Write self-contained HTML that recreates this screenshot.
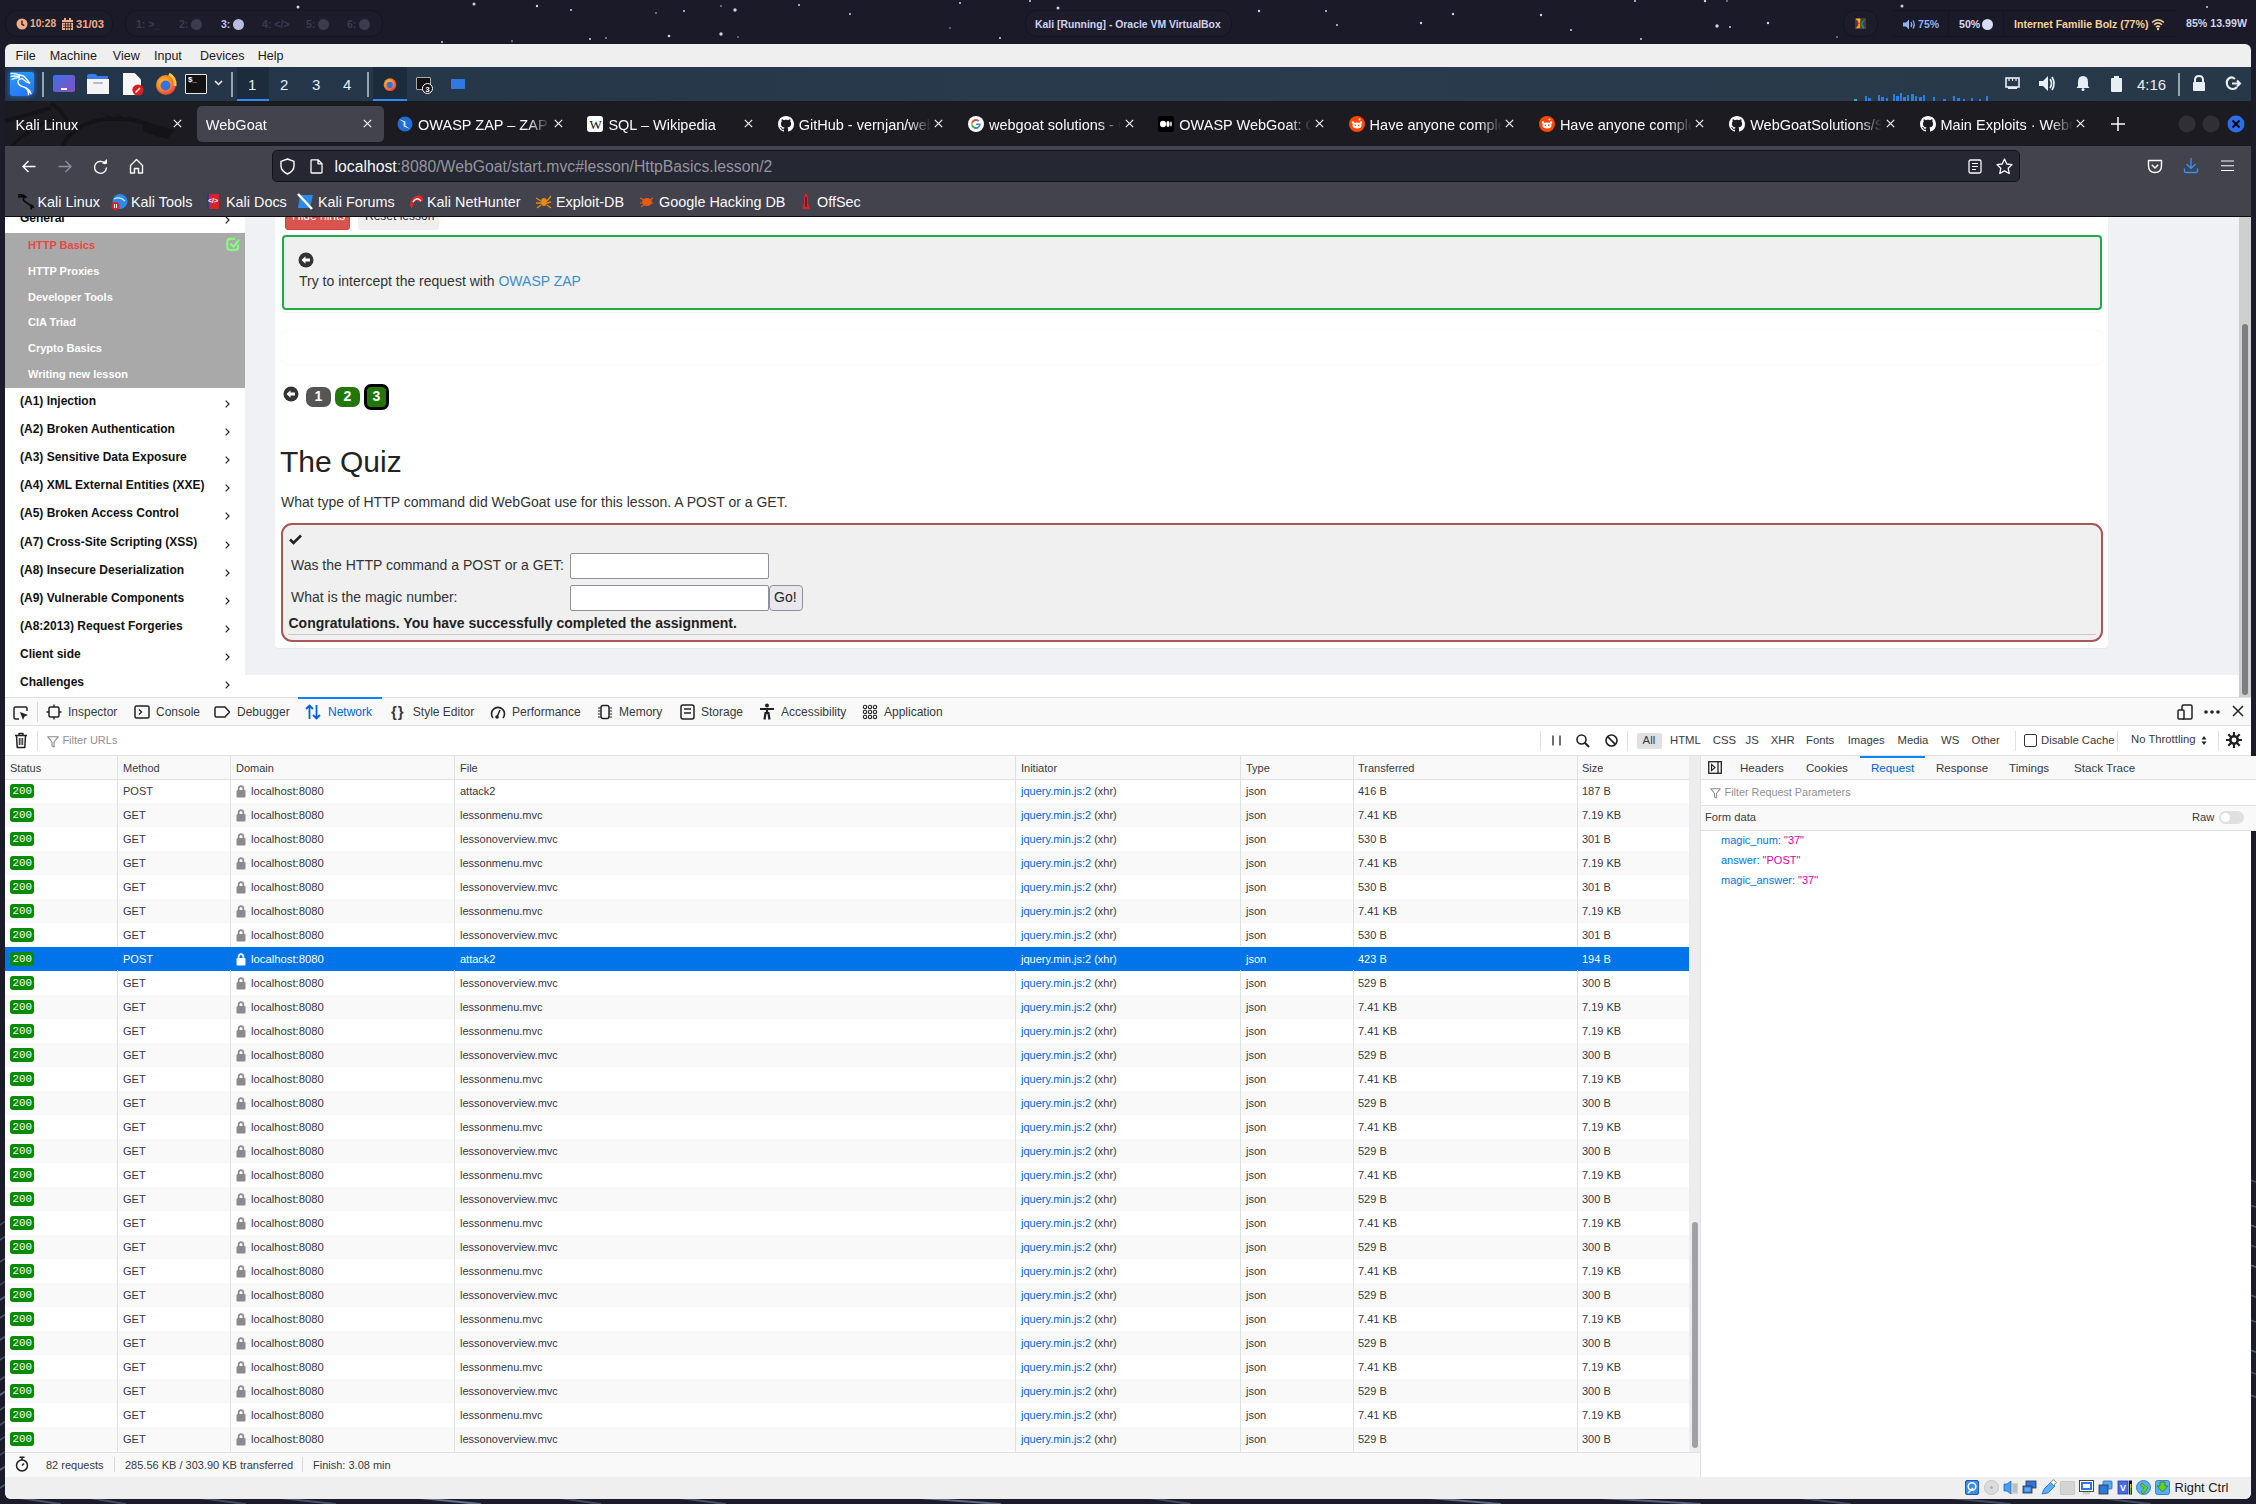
<!DOCTYPE html>
<html><head><meta charset="utf-8">
<style>
*{margin:0;padding:0;box-sizing:border-box}
html,body{width:2256px;height:1504px;overflow:hidden}
body{background:#1b1b29;font-family:"Liberation Sans",sans-serif;position:relative}
.a{position:absolute}
.t{position:absolute;white-space:nowrap;line-height:1}
svg{position:absolute;overflow:visible}
/* top desktop bar */
.pill{position:absolute;top:10px;height:27px;background:#1d1c2b;border:1px solid #15141f;border-radius:12px}
/* window */
#win{position:absolute;left:5px;top:44px;width:2246px;height:1455px;background:#efefef;border-radius:6px;overflow:hidden}
#vbmenu{position:absolute;left:5px;top:44px;width:2246px;height:23px}
#vbmenu span{position:absolute;top:6px;font-size:12.5px;color:#1a1a1a;line-height:1}
#panel{position:absolute;left:5px;top:67px;width:2246px;height:34px;background:linear-gradient(90deg,#233548,#293b4c 60%,#273949)}
#tabs{position:absolute;left:5px;top:101px;width:2246px;height:45px;background:#1c1b22}
#nav{position:absolute;left:5px;top:146px;width:2246px;height:40px;background:#42434c}
#bm{position:absolute;left:5px;top:186px;width:2246px;height:31px;background:#42434c;border-bottom:1px solid #0c0c0d}
.tab{position:absolute;top:5px;height:36px;width:188px;border-radius:5px}
.tab .tt{position:absolute;top:10px;font-size:14.4px;color:#fbfbfe;white-space:nowrap;overflow:hidden}
.tab .x{position:absolute;top:8px;width:16px;height:16px}
.bmi{position:absolute;top:8px;font-size:14.3px;color:#fbfbfe;white-space:nowrap}
</style></head>
<body>
<!-- desktop stars -->
<div class="a" style="left:0;top:0;width:2256px;height:44px;background:#1b1a29"></div>
<svg style="left:0;top:0" width="2256" height="44"><circle cx="474" cy="4" r="1.5" fill="#dfe8ff" opacity="0.9"/><circle cx="537" cy="6" r="1.2" fill="#dfe8ff" opacity="0.9"/><circle cx="571" cy="10" r="1" fill="#dfe8ff" opacity="0.9"/><circle cx="735" cy="10" r="1.7" fill="#dfe8ff" opacity="0.9"/><circle cx="684" cy="11" r="1" fill="#dfe8ff" opacity="0.9"/><circle cx="656" cy="13" r="0.8" fill="#dfe8ff" opacity="0.9"/><circle cx="721" cy="6" r="0.8" fill="#dfe8ff" opacity="0.9"/><circle cx="799" cy="5" r="1" fill="#dfe8ff" opacity="0.9"/><circle cx="850" cy="14" r="1" fill="#dfe8ff" opacity="0.9"/><circle cx="721" cy="34" r="1.7" fill="#dfe8ff" opacity="0.9"/><circle cx="669" cy="36" r="1.3" fill="#dfe8ff" opacity="0.9"/><circle cx="590" cy="39" r="1" fill="#dfe8ff" opacity="0.9"/><circle cx="606" cy="38" r="0.8" fill="#dfe8ff" opacity="0.9"/><circle cx="738" cy="37" r="0.7" fill="#dfe8ff" opacity="0.9"/><circle cx="442" cy="42" r="1" fill="#dfe8ff" opacity="0.9"/><circle cx="512" cy="41" r="0.8" fill="#dfe8ff" opacity="0.9"/><circle cx="1058" cy="8" r="1.5" fill="#dfe8ff" opacity="0.9"/><circle cx="1030" cy="1" r="1" fill="#dfe8ff" opacity="0.9"/><circle cx="950" cy="28" r="0.7" fill="#dfe8ff" opacity="0.9"/><circle cx="1259" cy="11" r="1.2" fill="#dfe8ff" opacity="0.9"/><circle cx="1326" cy="11" r="1" fill="#dfe8ff" opacity="0.9"/><circle cx="1337" cy="25" r="1" fill="#dfe8ff" opacity="0.9"/><circle cx="1421" cy="23" r="1.2" fill="#dfe8ff" opacity="0.9"/><circle cx="1453" cy="14" r="1.2" fill="#dfe8ff" opacity="0.9"/><circle cx="1541" cy="15" r="1.2" fill="#dfe8ff" opacity="0.9"/><circle cx="1571" cy="30" r="1" fill="#dfe8ff" opacity="0.9"/><circle cx="1641" cy="39" r="1" fill="#dfe8ff" opacity="0.9"/><circle cx="1717" cy="26" r="1.7" fill="#dfe8ff" opacity="0.9"/><circle cx="1730" cy="27" r="1" fill="#dfe8ff" opacity="0.9"/><circle cx="1768" cy="23" r="1.2" fill="#dfe8ff" opacity="0.9"/><circle cx="1705" cy="1" r="1.2" fill="#dfe8ff" opacity="0.9"/><circle cx="1635" cy="1" r="1" fill="#dfe8ff" opacity="0.9"/><circle cx="1727" cy="1" r="0.8" fill="#dfe8ff" opacity="0.9"/><circle cx="298" cy="7" r="1.5" fill="#dfe8ff" opacity="0.9"/><circle cx="1902" cy="6" r="1.5" fill="#dfe8ff" opacity="0.9"/><circle cx="2207" cy="7" r="1" fill="#dfe8ff" opacity="0.9"/><circle cx="1837" cy="37" r="0.8" fill="#dfe8ff" opacity="0.9"/><circle cx="1102" cy="12" r="1" fill="#dfe8ff" opacity="0.9"/><circle cx="1128" cy="20" r="1.2" fill="#dfe8ff" opacity="0.9"/><circle cx="960" cy="3" r="1" fill="#dfe8ff" opacity="0.9"/><circle cx="1175" cy="30" r="1" fill="#dfe8ff" opacity="0.9"/><circle cx="1000" cy="38" r="1" fill="#dfe8ff" opacity="0.9"/></svg>
<svg style="left:0;top:0" width="2256" height="1504"><g stroke-linecap="round"><path d="M20 1498L60 1504" stroke="#9fb8e8" stroke-width="2" opacity="0.35"/><path d="M90 1498L125 1504" stroke="#9fb8e8" stroke-width="2" opacity="0.3"/><path d="M200 1498L245 1504" stroke="#9fb8e8" stroke-width="2" opacity="0.3"/><path d="M280 1498L335 1504" stroke="#9fb8e8" stroke-width="2" opacity="0.35"/><path d="M420 1498L480 1504" stroke="#9fb8e8" stroke-width="2" opacity="0.55"/><path d="M560 1498L600 1504" stroke="#9fb8e8" stroke-width="2" opacity="0.3"/><path d="M680 1498L725 1504" stroke="#9fb8e8" stroke-width="2" opacity="0.35"/><path d="M920 1498L1000 1504" stroke="#9fb8e8" stroke-width="2" opacity="0.5"/><path d="M1150 1498L1190 1504" stroke="#9fb8e8" stroke-width="2" opacity="0.3"/><path d="M1430 1498L1500 1504" stroke="#9fb8e8" stroke-width="2" opacity="0.5"/><path d="M1600 1498L1700 1504" stroke="#9fb8e8" stroke-width="2" opacity="0.45"/><path d="M1800 1498L1850 1504" stroke="#9fb8e8" stroke-width="2" opacity="0.3"/><path d="M1950 1498L2010 1504" stroke="#9fb8e8" stroke-width="2" opacity="0.3"/><path d="M2100 1498L2150 1504" stroke="#9fb8e8" stroke-width="2" opacity="0.3"/><path d="M0 1300L6 1296" stroke="#9fb8e8" stroke-width="2" opacity="0.4"/><path d="M0 1340L6 1336" stroke="#9fb8e8" stroke-width="2" opacity="0.35"/><path d="M0 1380L6 1376" stroke="#9fb8e8" stroke-width="2" opacity="0.3"/><path d="M0 1395L6 1391" stroke="#9fb8e8" stroke-width="2" opacity="0.45"/><path d="M0 1425L6 1421" stroke="#9fb8e8" stroke-width="2" opacity="0.3"/><path d="M0 1470L6 1466" stroke="#9fb8e8" stroke-width="2" opacity="0.4"/><path d="M2250 1180L2256 1182" stroke="#9fb8e8" stroke-width="1.5" opacity="0.3"/><path d="M2250 1205L2256 1207" stroke="#9fb8e8" stroke-width="1.5" opacity="0.35"/><path d="M2250 1225L2256 1227" stroke="#9fb8e8" stroke-width="1.5" opacity="0.45"/><path d="M2250 1245L2256 1247" stroke="#9fb8e8" stroke-width="1.5" opacity="0.3"/><path d="M2250 1265L2256 1267" stroke="#9fb8e8" stroke-width="1.5" opacity="0.5"/><path d="M2250 1295L2256 1297" stroke="#9fb8e8" stroke-width="1.5" opacity="0.4"/><path d="M2250 1320L2256 1322" stroke="#9fb8e8" stroke-width="1.5" opacity="0.35"/><path d="M2250 1350L2256 1352" stroke="#9fb8e8" stroke-width="1.5" opacity="0.45"/><path d="M2250 1372L2256 1374" stroke="#9fb8e8" stroke-width="1.5" opacity="0.3"/><path d="M2250 1395L2256 1397" stroke="#9fb8e8" stroke-width="1.5" opacity="0.4"/><path d="M0 1225L6 1221" stroke="#9fb8e8" stroke-width="1.5" opacity="0.3"/><path d="M0 1240L6 1236" stroke="#9fb8e8" stroke-width="1.5" opacity="0.35"/><path d="M0 1262L6 1258" stroke="#9fb8e8" stroke-width="1.5" opacity="0.4"/><path d="M0 1285L6 1281" stroke="#9fb8e8" stroke-width="1.5" opacity="0.3"/><path d="M0 1318L6 1314" stroke="#9fb8e8" stroke-width="1.5" opacity="0.4"/><path d="M0 1360L6 1356" stroke="#9fb8e8" stroke-width="1.5" opacity="0.35"/><path d="M0 1410L6 1406" stroke="#9fb8e8" stroke-width="1.5" opacity="0.4"/><path d="M0 1440L6 1436" stroke="#9fb8e8" stroke-width="1.5" opacity="0.35"/><path d="M0 1455L6 1451" stroke="#9fb8e8" stroke-width="1.5" opacity="0.3"/><path d="M0 1488L6 1484" stroke="#9fb8e8" stroke-width="1.5" opacity="0.4"/></g></svg>

<!-- top-left pill -->
<div class="pill" style="left:5px;width:108px"></div>
<svg style="left:16px;top:18px" width="12" height="12" viewBox="0 0 12 12"><circle cx="6" cy="6" r="5.5" fill="#f2ad85"/><path d="M6 2.5V6.3L8.3 7.6" stroke="#1d1c2b" stroke-width="1.4" fill="none"/></svg>
<div class="t" style="left:30px;top:19px;font-size:10.2px;font-weight:bold;color:#f2ad85">10:28</div>
<svg style="left:62px;top:18px" width="11" height="12" viewBox="0 0 11 12"><rect x="0" y="2" width="11" height="10" fill="#f2ad85"/><rect x="2" y="0" width="2" height="3" fill="#f2ad85"/><rect x="7" y="0" width="2" height="3" fill="#f2ad85"/><path d="M0 4.5H11M1 7H10M1 9.5H10M3.5 5V12M6 5V12M8.5 5V12" stroke="#1d1c2b" stroke-width="0.8"/></svg>
<div class="t" style="left:76px;top:19px;font-size:11.2px;font-weight:bold;color:#f2ad85">31/03</div>

<div class="pill" style="left:125px;width:258px"></div>
<div class="t" style="left:136px;top:19px;font-size:10.5px;font-weight:bold;color:#3b3a4f">1: &gt;_</div>
<div class="t" style="left:179px;top:19px;font-size:10.5px;font-weight:bold;color:#3b3a4f">2:</div>
<svg style="left:191px;top:19px" width="11" height="11"><circle cx="5.5" cy="5.5" r="5.5" fill="#3b3a4f"/></svg>
<div class="t" style="left:221px;top:19px;font-size:10.5px;font-weight:bold;color:#c0c3e0">3:</div>
<svg style="left:233px;top:19px" width="11" height="11"><circle cx="5.5" cy="5.5" r="5.5" fill="#b8bce0"/></svg>
<div class="t" style="left:262px;top:19px;font-size:10.5px;font-weight:bold;color:#3b3a4f">4: &lt;/&gt;</div>
<div class="t" style="left:306px;top:19px;font-size:10.5px;font-weight:bold;color:#3b3a4f">5:</div>
<svg style="left:318px;top:19px" width="11" height="11"><circle cx="5.5" cy="5.5" r="5.5" fill="#3b3a4f"/></svg>
<div class="t" style="left:347px;top:19px;font-size:10.5px;font-weight:bold;color:#3b3a4f">6:</div>
<svg style="left:359px;top:19px" width="11" height="11"><circle cx="5.5" cy="5.5" r="5.5" fill="#3b3a4f"/></svg>

<!-- title pill -->
<div class="pill" style="left:1025px;width:207px"></div>
<div class="t" style="left:1035px;top:20px;font-size:10.4px;font-weight:bold;color:#d0d3ee">Kali [Running] - Oracle VM VirtualBox</div>

<!-- right pills -->
<div class="pill" style="left:1843px;width:35px"></div>
<svg style="left:1855px;top:18px" width="11" height="11" viewBox="0 0 11 11"><rect x="0" y="0" width="11" height="11" fill="#4a3a38"/><path d="M0.8 0.8H5.2V10.2H0.8L3 7.5V3.5Z" fill="#ff9a10"/><path d="M2.5 4L5.2 5.5L2.5 7Z" fill="#ee3a00"/><path d="M0.8 0.8H5.2V3.5Z" fill="#ffc800"/><path d="M5.4 5.5L9.5 0.8V3L7.5 5.5L9.5 10.2H7.5Z" fill="#0a8a8a"/><path d="M5.4 5.5L7 4L7.5 5.5Z" fill="#0a8a20"/><path d="M7.5 7L9.5 10.2H7.5Z" fill="#00b080"/></svg>
<div class="a" style="left:1893px;top:10px;width:283px;height:27px;background:#1b1a29;border-top:1px solid #15141f;border-bottom:1px solid #15141f"></div>
<div class="a" style="left:1948px;top:11px;width:1px;height:25px;background:#15141f"></div>
<div class="a" style="left:2003px;top:11px;width:1px;height:25px;background:#15141f"></div>
<svg style="left:1903px;top:19px" width="13" height="11" viewBox="0 0 13 11"><path d="M0 3.5H3L6 0.5V10.5L3 7.5H0Z" fill="#8fb1f0"/><path d="M8 3Q9.5 5.5 8 8M10 1.5Q12.5 5.5 10 9.5" stroke="#8fb1f0" stroke-width="1.3" fill="none"/></svg>
<div class="t" style="left:1918px;top:19px;font-size:10.6px;font-weight:bold;color:#8fb1f0">75%</div>
<div class="t" style="left:1959px;top:19px;font-size:10.6px;font-weight:bold;color:#d8dcf5">50%</div>
<svg style="left:1982px;top:19px" width="11" height="11"><circle cx="5.5" cy="5.5" r="5.5" fill="#d8dcf5"/></svg>
<div class="t" style="left:2014px;top:19px;font-size:10.57px;font-weight:bold;color:#f4d49a">Internet Familie Bolz (77%)</div>
<svg style="left:2151px;top:18px" width="14" height="12" viewBox="0 0 14 12"><path d="M1 4.5Q7 -1 13 4.5M3 6.8Q7 3 11 6.8M5 9Q7 7.3 9 9" stroke="#f4d49a" stroke-width="1.5" fill="none"/><circle cx="7" cy="11" r="1.2" fill="#f4d49a"/></svg>
<div class="t" style="left:2186px;top:18px;font-size:10.65px;font-weight:bold;color:#d0d3ee">85% 13.99W</div>

<div id="win"></div>
<div id="vbmenu">
  <span style="left:10.5px">File</span>
  <span style="left:44.7px">Machine</span>
  <span style="left:107.8px">View</span>
  <span style="left:149px">Input</span>
  <span style="left:195px">Devices</span>
  <span style="left:252.8px">Help</span>
</div>
<div id="panel"></div>
<!-- kali icon -->
<div class="a" style="left:10px;top:72px;width:24px;height:24px;border-radius:2px 2px 6px 2px;background:linear-gradient(160deg,#27a0ff,#2a6ef5);box-shadow:0 0 4px 1px rgba(40,130,255,.6)"></div>
<svg style="left:10px;top:72px" width="24" height="24" viewBox="0 0 24 24"><g stroke="#fff" stroke-width="1.3" fill="none" stroke-linecap="round"><path d="M1 1.5Q5 1.2 9.5 3.2M1.3 4.3Q5 3.6 9.5 4.6M2 7.2Q5 5.6 9.5 5.6"/><path d="M9.5 3.2Q13.5 3 15.5 6L20 11.5L16.5 10Q14.5 8.3 13 7.3"/><path d="M12.5 6.5Q7.5 6.8 8 10.5Q9 14 14 15Q18.5 16.5 18.5 22.5"/><path d="M14.5 15.3Q18 16 20.5 20M17.5 17.5L21 21.5"/></g></svg>
<div class="a" style="left:42px;top:72px;width:2px;height:25px;background:#9aa3ad"></div>
<div class="a" style="left:53px;top:75px;width:22px;height:17px;border-radius:2px;background:linear-gradient(135deg,#3a70e8,#8a4fc0)"></div>
<div class="a" style="left:61px;top:88px;width:6px;height:2px;background:#fff"></div>
<div class="a" style="left:87px;top:74px;width:10px;height:5px;border-radius:2px 2px 0 0;background:#3a7ae8"></div>
<div class="a" style="left:88px;top:76px;width:20px;height:4px;background:#3a7ae8"></div>
<div class="a" style="left:87px;top:79px;width:22px;height:15px;background:#f4f4f4"></div>
<div class="a" style="left:93px;top:82px;width:10px;height:2px;border-radius:1px;background:#bbb"></div>
<div class="a" style="left:123px;top:73px;width:18px;height:22px;background:#f6f6f6;clip-path:polygon(0 0,65% 0,100% 30%,100% 100%,0 100%)"></div>
<svg style="left:132px;top:84px" width="12" height="12"><circle cx="6" cy="6" r="5.6" fill="#d81e1e"/><path d="M3.5 8.5L8 4" stroke="#fff" stroke-width="1.5"/></svg>
<svg style="left:155px;top:73px" width="22" height="22" viewBox="0 0 22 22"><defs><radialGradient id="ff" cx="0.4" cy="0.4" r="0.7"><stop offset="0" stop-color="#ffd23c"/><stop offset="0.5" stop-color="#ff8a1e"/><stop offset="1" stop-color="#e4254a"/></radialGradient></defs><circle cx="11" cy="12" r="10" fill="url(#ff)"/><circle cx="10.5" cy="12.5" r="5" fill="#3b6fe0"/><path d="M14 1Q21 5 20 13" stroke="#ffc53a" stroke-width="3" fill="none"/></svg>
<div class="a" style="left:185px;top:74px;width:22px;height:20px;background:#121212;border:1px solid #e8e8e8;border-radius:1px"></div>
<div class="t" style="left:188px;top:76px;font-size:8px;font-weight:bold;color:#fff">$_</div>
<svg style="left:214px;top:80px" width="9" height="6"><path d="M1 1L4.5 4.5L8 1" stroke="#fff" stroke-width="1.5" fill="none"/></svg>
<div class="a" style="left:231px;top:72px;width:2px;height:25px;background:#9aa3ad"></div>
<div class="a" style="left:237px;top:67px;width:32px;height:34px;background:#1d2c3d"></div>
<div class="a" style="left:237px;top:99px;width:32px;height:2px;background:#2f8af5"></div>
<div class="t" style="left:248px;top:77px;font-size:15px;color:#e8eef5">1</div>
<div class="t" style="left:280px;top:77px;font-size:15px;color:#e8eef5">2</div>
<div class="t" style="left:312px;top:77px;font-size:15px;color:#e8eef5">3</div>
<div class="t" style="left:343px;top:77px;font-size:15px;color:#e8eef5">4</div>
<div class="a" style="left:367px;top:72px;width:2px;height:25px;background:#9aa3ad"></div>
<div class="a" style="left:373px;top:67px;width:34px;height:34px;background:#1d2c3d"></div>
<div class="a" style="left:373px;top:99px;width:34px;height:2px;background:#2f8af5"></div>
<svg style="left:383px;top:77px" width="14" height="14" viewBox="0 0 22 22"><circle cx="11" cy="12" r="10" fill="url(#ff)"/><circle cx="10.5" cy="12.5" r="5" fill="#3b6fe0"/></svg>
<div class="a" style="left:416px;top:77px;width:15px;height:13px;background:#121212;border:1px solid #aaa;border-radius:1px"></div>
<svg style="left:422px;top:83px" width="11" height="11"><circle cx="5.5" cy="5.5" r="5" fill="#111" stroke="#fff" stroke-width="1"/><text x="5.5" y="8.6" font-size="8" font-family="Liberation Sans" font-weight="bold" fill="#fff" text-anchor="middle">3</text></svg>
<div class="a" style="left:451px;top:79px;width:14px;height:10px;border-radius:1px;background:#2f7ae0"></div>
<!-- right side panel -->
<svg style="left:1853px;top:88px" width="140" height="13"><g fill="#2b7de0">
<rect x="1" y="11" width="3" height="2" fill="#19c0a0"/><rect x="12" y="8" width="2" height="5"/><rect x="15" y="10" width="3" height="3"/><rect x="25" y="7" width="2" height="6"/><rect x="28" y="9" width="3" height="4"/><rect x="33" y="10" width="2" height="3"/><rect x="40" y="6" width="2" height="7"/><rect x="43" y="8" width="3" height="5"/><rect x="47" y="5" width="2" height="8"/><rect x="50" y="9" width="3" height="4"/><rect x="54" y="7" width="2" height="6"/><rect x="58" y="6" width="3" height="7"/><rect x="62" y="8" width="2" height="5"/><rect x="66" y="9" width="3" height="4"/><rect x="70" y="7" width="2" height="6"/><rect x="80" y="9" width="2" height="4"/><rect x="90" y="11" width="3" height="2"/><rect x="100" y="8" width="2" height="5"/><rect x="104" y="10" width="3" height="3"/><rect x="110" y="11" width="2" height="2"/><rect x="118" y="10" width="2" height="3"/><rect x="126" y="11" width="2" height="2"/><rect x="133" y="8" width="2" height="5"/></g></svg>
<svg style="left:2005px;top:77px" width="15" height="13" viewBox="0 0 15 13"><rect x="1" y="1" width="13" height="9" fill="none" stroke="#e8eef5" stroke-width="1.6"/><path d="M4 1V4M7.5 1V4M11 1V4" stroke="#e8eef5" stroke-width="1.2"/><rect x="3" y="10" width="9" height="2" fill="#e8eef5"/></svg>
<svg style="left:2039px;top:75px" width="17" height="17" viewBox="0 0 17 17"><path d="M0 6H4L9 1V16L4 11H0Z" fill="#e8eef5"/><path d="M11 4Q14 8.5 11 13M13 2Q17 8.5 13 15" stroke="#e8eef5" stroke-width="1.8" fill="none"/></svg>
<svg style="left:2076px;top:75px" width="14" height="16" viewBox="0 0 14 16"><path d="M7 1Q12 1 12 7V11L13.5 13H0.5L2 11V7Q2 1 7 1Z" fill="#e8eef5"/><circle cx="7" cy="14.5" r="1.5" fill="#e8eef5"/></svg>
<div class="a" style="left:2111px;top:78px;width:11px;height:14px;background:#e8eef5;border-radius:1px"></div>
<div class="a" style="left:2114px;top:76px;width:5px;height:3px;background:#e8eef5"></div>
<div class="t" style="left:2137px;top:77px;font-size:15px;color:#e8eef5">4:16</div>
<div class="a" style="left:2178px;top:73px;width:2px;height:23px;background:#9aa3ad"></div>
<svg style="left:2192px;top:75px" width="14" height="16" viewBox="0 0 14 16"><path d="M3 7V5Q3 1 7 1Q11 1 11 5V7" stroke="#e8eef5" stroke-width="2" fill="none"/><rect x="1" y="7" width="12" height="9" rx="1" fill="#e8eef5"/></svg>
<svg style="left:2225px;top:76px" width="16" height="15" viewBox="0 0 16 15"><path d="M10 3Q7 0.5 4.5 2Q1 4 2 8.5Q3.5 13 8 13Q10.5 13 12 11" stroke="#e8eef5" stroke-width="2.2" fill="none"/><path d="M7 7.5H15M12 4.5L15 7.5L12 10.5" stroke="#e8eef5" stroke-width="2" fill="none"/></svg>

<div id="tabs"></div>
<svg style="left:5px;top:101px" width="190" height="45" viewBox="0 0 190 45"><g stroke="#141418" fill="none" stroke-width="4"><path d="M57 46Q68 22 101 18Q135 16 158 31"/><path d="M0 20L46 7"/><path d="M46 2Q56 9 63 21"/><path d="M4 47Q25 27 50 17" stroke-width="3"/></g><g fill="#141418"><path d="M138 20L170 29L162 38Q150 35 138 30Z"/><path d="M97 12L106 18H112Z"/><path d="M109 12L117 18H123Z"/><path d="M121 14L129 19H135Z"/></g></svg>
<div class="t" style="left:15.5px;top:118px;width:154.5px;font-size:14.5px;color:#fbfbfe;overflow:hidden;-webkit-mask-image:linear-gradient(90deg,#000 132px,transparent 154px)">Kali Linux</div>
<svg style="left:173.0px;top:119px" width="9" height="9"><path d="M0.8 0.8L8.2 8.2M8.2 0.8L0.8 8.2" stroke="#fbfbfe" stroke-width="1.1"/></svg>
<div class="a" style="left:197.3px;top:106px;width:187px;height:36px;background:#42434c;border-radius:5px"></div>
<div class="t" style="left:205.8px;top:118px;width:154.5px;font-size:14.5px;color:#fbfbfe;overflow:hidden;-webkit-mask-image:linear-gradient(90deg,#000 132px,transparent 154px)">WebGoat</div>
<svg style="left:363.3px;top:119px" width="9" height="9"><path d="M0.8 0.8L8.2 8.2M8.2 0.8L0.8 8.2" stroke="#fbfbfe" stroke-width="1.1"/></svg>
<svg style="left:397.1px;top:116px" width="16" height="16" viewBox="0 0 16 16"><circle cx="8" cy="8" r="7.5" fill="#1f6fd0"/><path d="M2 3L9 6L6 8L13 13L6 10L9 8Z" fill="#fff"/></svg>
<div class="t" style="left:418.1px;top:118px;width:132.5px;font-size:14.5px;color:#fbfbfe;overflow:hidden;-webkit-mask-image:linear-gradient(90deg,#000 110px,transparent 132px)">OWASP ZAP – ZAP in Ten</div>
<svg style="left:553.6px;top:119px" width="9" height="9"><path d="M0.8 0.8L8.2 8.2M8.2 0.8L0.8 8.2" stroke="#fbfbfe" stroke-width="1.1"/></svg>
<div class="a" style="left:587.4px;top:116px;width:16px;height:16px;background:#fff;border-radius:3px"></div><div class="t" style="left:589.4px;top:118px;font-family:'Liberation Serif',serif;font-size:13px;color:#111">W</div>
<div class="t" style="left:608.4px;top:118px;width:132.5px;font-size:14.5px;color:#fbfbfe;overflow:hidden;-webkit-mask-image:linear-gradient(90deg,#000 110px,transparent 132px)">SQL – Wikipedia</div>
<svg style="left:743.9px;top:119px" width="9" height="9"><path d="M0.8 0.8L8.2 8.2M8.2 0.8L0.8 8.2" stroke="#fbfbfe" stroke-width="1.1"/></svg>
<svg style="left:777.7px;top:116px" width="16" height="16" viewBox="0 0 16 16"><path fill="#fbfbfe" d="M8 0C3.58 0 0 3.58 0 8c0 3.54 2.29 6.53 5.47 7.59.4.07.55-.17.55-.38 0-.19-.01-.82-.01-1.49-2.01.37-2.53-.49-2.69-.94-.09-.23-.48-.94-.82-1.13-.28-.15-.68-.52-.01-.53.63-.01 1.08.58 1.23.82.72 1.21 1.87.87 2.33.66.07-.52.28-.87.51-1.07-1.78-.2-3.640-.89-3.640-3.95 0-.87.31-1.59.82-2.15-.08-.2-.36-1.02.08-2.12 0 0 .67-.21 2.2.82.64-.18 1.32-.27 2-.27.68 0 1.36.09 2 .27 1.53-1.04 2.2-.82 2.2-.82.44 1.1.16 1.92.08 2.12.51.56.82 1.27.82 2.15 0 3.07-1.87 3.75-3.65 3.95.29.25.54.73.54 1.48 0 1.07-.01 1.93-.01 2.2 0 .21.15.46.55.38A8.013 8.013 0 0016 8c0-4.42-3.58-8-8-8z"/></svg>
<div class="t" style="left:798.7px;top:118px;width:132.5px;font-size:14.5px;color:#fbfbfe;overflow:hidden;-webkit-mask-image:linear-gradient(90deg,#000 110px,transparent 132px)">GitHub - vernjan/webgoat</div>
<svg style="left:934.2px;top:119px" width="9" height="9"><path d="M0.8 0.8L8.2 8.2M8.2 0.8L0.8 8.2" stroke="#fbfbfe" stroke-width="1.1"/></svg>
<svg style="left:968.0px;top:116px" width="16" height="16" viewBox="0 0 16 16"><circle cx="8" cy="8" r="8" fill="#fff"/><path d="M8 3.2A4.8 4.8 0 0 1 11.2 4.4L10 5.6A3.2 3.2 0 1 0 11 9H8V7.4H12.7A4.8 4.8 0 1 1 8 3.2Z" fill="#4285f4"/><path d="M3.5 6.2A4.8 4.8 0 0 1 11.2 4.4L10 5.6A3.2 3.2 0 0 0 5 6.8Z" fill="#ea4335"/><path d="M3.4 9.8A4.8 4.8 0 0 0 10.6 12.2L9.4 11A3.2 3.2 0 0 1 5 9.2Z" fill="#34a853"/><path d="M3.4 9.8A4.8 4.8 0 0 1 3.5 6.2L5 6.8A3.2 3.2 0 0 0 5 9.2Z" fill="#fbbc05"/></svg>
<div class="t" style="left:989.0px;top:118px;width:132.5px;font-size:14.5px;color:#fbfbfe;overflow:hidden;-webkit-mask-image:linear-gradient(90deg,#000 110px,transparent 132px)">webgoat solutions - Google</div>
<svg style="left:1124.5px;top:119px" width="9" height="9"><path d="M0.8 0.8L8.2 8.2M8.2 0.8L0.8 8.2" stroke="#fbfbfe" stroke-width="1.1"/></svg>
<div class="a" style="left:1158.3px;top:116px;width:16px;height:16px;background:#000;border-radius:2px"></div><svg style="left:1158.3px;top:116px" width="16" height="16"><ellipse cx="5" cy="8" rx="3" ry="3.2" fill="#fff"/><ellipse cx="10" cy="8" rx="1.6" ry="3" fill="#fff"/><ellipse cx="13" cy="8" rx="0.8" ry="2.7" fill="#fff"/></svg>
<div class="t" style="left:1179.3px;top:118px;width:132.5px;font-size:14.5px;color:#fbfbfe;overflow:hidden;-webkit-mask-image:linear-gradient(90deg,#000 110px,transparent 132px)">OWASP WebGoat: General</div>
<svg style="left:1314.8px;top:119px" width="9" height="9"><path d="M0.8 0.8L8.2 8.2M8.2 0.8L0.8 8.2" stroke="#fbfbfe" stroke-width="1.1"/></svg>
<svg style="left:1348.6px;top:116px" width="16" height="16" viewBox="0 0 16 16"><circle cx="8" cy="8" r="8" fill="#ff4500"/><ellipse cx="8" cy="9.5" rx="4.5" ry="3" fill="#fff"/><circle cx="12" cy="6.5" r="1.2" fill="#fff"/><circle cx="4" cy="6.5" r="1.2" fill="#fff"/><circle cx="10.5" cy="3.5" r="1" fill="#fff"/><circle cx="6.3" cy="9.2" r="0.8" fill="#ff4500"/><circle cx="9.7" cy="9.2" r="0.8" fill="#ff4500"/></svg>
<div class="t" style="left:1369.6px;top:118px;width:132.5px;font-size:14.5px;color:#fbfbfe;overflow:hidden;-webkit-mask-image:linear-gradient(90deg,#000 110px,transparent 132px)">Have anyone completed</div>
<svg style="left:1505.1px;top:119px" width="9" height="9"><path d="M0.8 0.8L8.2 8.2M8.2 0.8L0.8 8.2" stroke="#fbfbfe" stroke-width="1.1"/></svg>
<svg style="left:1538.9px;top:116px" width="16" height="16" viewBox="0 0 16 16"><circle cx="8" cy="8" r="8" fill="#ff4500"/><ellipse cx="8" cy="9.5" rx="4.5" ry="3" fill="#fff"/><circle cx="12" cy="6.5" r="1.2" fill="#fff"/><circle cx="4" cy="6.5" r="1.2" fill="#fff"/><circle cx="10.5" cy="3.5" r="1" fill="#fff"/><circle cx="6.3" cy="9.2" r="0.8" fill="#ff4500"/><circle cx="9.7" cy="9.2" r="0.8" fill="#ff4500"/></svg>
<div class="t" style="left:1559.9px;top:118px;width:132.5px;font-size:14.5px;color:#fbfbfe;overflow:hidden;-webkit-mask-image:linear-gradient(90deg,#000 110px,transparent 132px)">Have anyone completed</div>
<svg style="left:1695.4px;top:119px" width="9" height="9"><path d="M0.8 0.8L8.2 8.2M8.2 0.8L0.8 8.2" stroke="#fbfbfe" stroke-width="1.1"/></svg>
<svg style="left:1729.2px;top:116px" width="16" height="16" viewBox="0 0 16 16"><path fill="#fbfbfe" d="M8 0C3.58 0 0 3.58 0 8c0 3.54 2.29 6.53 5.47 7.59.4.07.55-.17.55-.38 0-.19-.01-.82-.01-1.49-2.01.37-2.53-.49-2.69-.94-.09-.23-.48-.94-.82-1.13-.28-.15-.68-.52-.01-.53.63-.01 1.08.58 1.23.82.72 1.21 1.87.87 2.33.66.07-.52.28-.87.51-1.07-1.78-.2-3.640-.89-3.640-3.95 0-.87.31-1.59.82-2.15-.08-.2-.36-1.02.08-2.12 0 0 .67-.21 2.2.82.64-.18 1.32-.27 2-.27.68 0 1.36.09 2 .27 1.53-1.04 2.2-.82 2.2-.82.44 1.1.16 1.92.08 2.12.51.56.82 1.27.82 2.15 0 3.07-1.87 3.75-3.65 3.95.29.25.54.73.54 1.48 0 1.07-.01 1.93-.01 2.2 0 .21.15.46.55.38A8.013 8.013 0 0016 8c0-4.42-3.58-8-8-8z"/></svg>
<div class="t" style="left:1750.2px;top:118px;width:132.5px;font-size:14.5px;color:#fbfbfe;overflow:hidden;-webkit-mask-image:linear-gradient(90deg,#000 110px,transparent 132px)">WebGoatSolutions/Sol</div>
<svg style="left:1885.7px;top:119px" width="9" height="9"><path d="M0.8 0.8L8.2 8.2M8.2 0.8L0.8 8.2" stroke="#fbfbfe" stroke-width="1.1"/></svg>
<svg style="left:1919.5px;top:116px" width="16" height="16" viewBox="0 0 16 16"><path fill="#fbfbfe" d="M8 0C3.58 0 0 3.58 0 8c0 3.54 2.29 6.53 5.47 7.59.4.07.55-.17.55-.38 0-.19-.01-.82-.01-1.49-2.01.37-2.53-.49-2.69-.94-.09-.23-.48-.94-.82-1.13-.28-.15-.68-.52-.01-.53.63-.01 1.08.58 1.23.82.72 1.21 1.87.87 2.33.66.07-.52.28-.87.51-1.07-1.78-.2-3.640-.89-3.640-3.95 0-.87.31-1.59.82-2.15-.08-.2-.36-1.02.08-2.12 0 0 .67-.21 2.2.82.64-.18 1.32-.27 2-.27.68 0 1.36.09 2 .27 1.53-1.04 2.2-.82 2.2-.82.44 1.1.16 1.92.08 2.12.51.56.82 1.27.82 2.15 0 3.07-1.87 3.75-3.65 3.95.29.25.54.73.54 1.48 0 1.07-.01 1.93-.01 2.2 0 .21.15.46.55.38A8.013 8.013 0 0016 8c0-4.42-3.58-8-8-8z"/></svg>
<div class="t" style="left:1940.5px;top:118px;width:132.5px;font-size:14.5px;color:#fbfbfe;overflow:hidden;-webkit-mask-image:linear-gradient(90deg,#000 110px,transparent 132px)">Main Exploits · WebGoat</div>
<svg style="left:2076.0px;top:119px" width="9" height="9"><path d="M0.8 0.8L8.2 8.2M8.2 0.8L0.8 8.2" stroke="#fbfbfe" stroke-width="1.1"/></svg>
<svg style="left:2111px;top:117px" width="14" height="14"><path d="M7 0V14M0 7H14" stroke="#fbfbfe" stroke-width="1.5"/></svg>
<svg style="left:2178px;top:115px" width="70" height="18"><circle cx="9" cy="9" r="8.5" fill="#2f3036"/><circle cx="33" cy="9" r="8.5" fill="#2f3036"/><circle cx="58" cy="9" r="8.5" fill="#2a6ef0"/><path d="M54.5 5.5L61.5 12.5M61.5 5.5L54.5 12.5" stroke="#0d0d10" stroke-width="2.2"/></svg>
<div id="nav"></div>
<svg style="left:22px;top:160px" width="14" height="13" viewBox="0 0 14 13"><path d="M13.5 6.5H1M6.5 1L1 6.5L6.5 12" stroke="#fbfbfe" stroke-width="1.4" fill="none"/></svg>
<svg style="left:58px;top:160px" width="14" height="13" viewBox="0 0 14 13"><path d="M0.5 6.5H13M7.5 1L13 6.5L7.5 12" stroke="#8f8f9d" stroke-width="1.4" fill="none"/></svg>
<svg style="left:93px;top:159px" width="15" height="15" viewBox="0 0 15 15"><path d="M12.5 5A6 6 0 1 0 13.5 8.5" stroke="#fbfbfe" stroke-width="1.4" fill="none"/><path d="M9 4.8H14V0Z" fill="#fbfbfe"/></svg>
<svg style="left:129px;top:158px" width="15" height="16" viewBox="0 0 15 16"><path d="M1.5 15V7.5L7.5 1.5L13.5 7.5V15H9.5V10.5H5.5V15Z" stroke="#fbfbfe" stroke-width="1.4" fill="none" stroke-linejoin="round"/></svg>
<div class="a" style="left:272px;top:150px;width:1748px;height:32px;background:#1c1b22;border-radius:5px;border:1px solid #141318"></div>
<div class="a" style="left:273px;top:151px;width:1746px;height:30px;background:#252733;border-radius:4px"></div>
<svg style="left:280px;top:158px" width="15" height="17" viewBox="0 0 15 17"><path d="M7.5 1L14 3.3V8Q14 13 7.5 16Q1 13 1 8V3.3Z" stroke="#fbfbfe" stroke-width="1.4" fill="none" stroke-linejoin="round"/></svg>
<svg style="left:310px;top:159px" width="13" height="15" viewBox="0 0 13 15"><path d="M1 1.5Q1 0.8 1.7 0.8H8L12 4.8V13.3Q12 14 11.3 14H1.7Q1 14 1 13.3Z M8 0.8V4.8H12" stroke="#fbfbfe" stroke-width="1.3" fill="none" stroke-linejoin="round"/></svg>
<div class="t" style="left:334.5px;top:159px;font-size:15.77px;color:#fbfbfe">localhost<span style="color:#95959f">:8080/WebGoat/start.mvc#lesson/HttpBasics.lesson/2</span></div>
<svg style="left:1968px;top:159px" width="14" height="15" viewBox="0 0 14 15"><rect x="1" y="1" width="12" height="13" rx="1.5" stroke="#fbfbfe" stroke-width="1.3" fill="none"/><path d="M4 4.5H10M4 7.5H10M4 10.5H8" stroke="#fbfbfe" stroke-width="1.2"/></svg>
<svg style="left:1996px;top:158px" width="17" height="17" viewBox="0 0 17 17"><path d="M8.5 1L10.8 6L16 6.6L12.2 10.2L13.2 15.5L8.5 12.9L3.8 15.5L4.8 10.2L1 6.6L6.2 6Z" stroke="#fbfbfe" stroke-width="1.3" fill="none" stroke-linejoin="round"/></svg>
<svg style="left:2147px;top:159px" width="16" height="15" viewBox="0 0 16 15"><path d="M1.5 1.5H14.5V6.5Q14.5 13.5 8 13.5Q1.5 13.5 1.5 6.5Z" stroke="#fbfbfe" stroke-width="1.4" fill="none" stroke-linejoin="round"/><path d="M4.8 5.8L8 9L11.2 5.8" stroke="#fbfbfe" stroke-width="1.5" fill="none"/></svg>
<svg style="left:2183px;top:157px" width="16" height="17" viewBox="0 0 16 17"><path d="M8 1V11.5M3.5 7L8 11.5L12.5 7M1.5 11.5V14Q1.5 15.5 3 15.5H13Q14.5 15.5 14.5 14V11.5" stroke="#3a8ef6" stroke-width="1.4" fill="none"/></svg>
<svg style="left:2221px;top:160px" width="13" height="12" viewBox="0 0 13 12"><path d="M0 1H13M0 5.75H13M0 10.5H13" stroke="#fbfbfe" stroke-width="1.15"/></svg>

<div id="bm"></div>
<svg style="left:16.8px;top:193px" width="17" height="17" viewBox="0 0 17 17"><path d="M1 2Q6 1 9 4Q5 5 7 8Q10 10 13 12Q15 14 14 16.5M1 4Q5 3 8 5M13 12Q16 12 16.5 15" stroke="#0a0a0a" stroke-width="1.6" fill="none"/></svg>
<div class="t" style="left:37.5px;top:195px;font-size:14.4px;color:#fbfbfe">Kali Linux</div>
<svg style="left:111px;top:193px" width="17" height="17"><circle cx="9" cy="8.5" r="7.5" fill="#2d8ae8"/><path d="M3 6Q9 3 14 8" stroke="#cfe8ff" stroke-width="1.3" fill="none"/><circle cx="4.5" cy="13" r="4" fill="#e02020"/><path d="M3.5 11V15M5.5 11V15" stroke="#fff" stroke-width="1"/></svg>
<div class="t" style="left:131px;top:195px;font-size:14.4px;color:#fbfbfe">Kali Tools</div>
<div class="a" style="left:207px;top:194px;width:12px;height:15px;background:#d8232a;border-left:2px solid #2a3a8a"></div><div class="t" style="left:208px;top:197px;font-size:7px;font-weight:bold;color:#fff">&lt;/&gt;</div>
<div class="t" style="left:226px;top:195px;font-size:14.4px;color:#fbfbfe">Kali Docs</div>
<svg style="left:297px;top:193px" width="17" height="17"><path d="M3 2H16L13 15H1Z" fill="#2d8ae8"/><path d="M1 1L15 16" stroke="#fff" stroke-width="2.5"/></svg>
<div class="t" style="left:318px;top:195px;font-size:14.4px;color:#fbfbfe">Kali Forums</div>
<svg style="left:408px;top:193px" width="17" height="17"><path d="M2 12Q3 3 11 2Q16 3 15 8L11 9Q9 6 6 9L4 16Z" fill="#e02424"/><path d="M5 9Q9 3 13 8" stroke="#fff" stroke-width="1.4" fill="none"/></svg>
<div class="t" style="left:427px;top:195px;font-size:14.4px;color:#fbfbfe">Kali NetHunter</div>
<svg style="left:535px;top:193px" width="17" height="17"><ellipse cx="9" cy="9" rx="3" ry="4" fill="#e88a10"/><path d="M1 5L6 8M1 10L6 10M2 15L6 12M16 3L12 8M16 9L12 10M16 15L12 12" stroke="#e88a10" stroke-width="1.3"/></svg>
<div class="t" style="left:556px;top:195px;font-size:14.4px;color:#fbfbfe">Exploit-DB</div>
<svg style="left:639px;top:195px" width="15" height="13"><ellipse cx="8" cy="7" rx="5" ry="4" fill="#e85a10"/><path d="M1 3L5 5M1 8H4M2 12L5 10M14 3L11 5M14 8H12" stroke="#e85a10" stroke-width="1.2"/></svg>
<div class="t" style="left:659px;top:195px;font-size:14.4px;color:#fbfbfe">Google Hacking DB</div>
<svg style="left:800px;top:193px" width="12" height="17"><path d="M6 0Q9 4 8 10L10 16H2L4 10Q3 4 6 0Z" fill="#d8232a"/><path d="M6 4V14" stroke="#111" stroke-width="1"/></svg>
<div class="t" style="left:817px;top:195px;font-size:14.4px;color:#fbfbfe">OffSec</div>
<!-- page -->
<div class="a" style="left:5px;top:217px;width:2246px;height:480px;background:#fff"></div>
<div class="a" style="left:245px;top:217px;width:1994px;height:458px;background:#f0f1f5"></div>
<div class="a" style="left:275px;top:217px;width:1833px;height:431px;background:#fff;border-radius:0 0 4px 4px;box-shadow:0 1px 1px rgba(0,0,0,.04)"></div>
<!-- page scrollbar -->
<div class="a" style="left:2239px;top:217px;width:12px;height:480px;background:#cfcfcf"></div>
<div class="a" style="left:2242px;top:324px;width:6px;height:371px;background:#7c7f80;border-radius:3px"></div>
<!-- sidebar -->
<div class="a" style="left:5px;top:233px;width:240px;height:155px;background:#a9a9a9"></div>
<div class="t" style="left:28px;top:240px;font-size:11px;font-weight:bold;color:#e8483f">HTTP Basics</div>
<div class="t" style="left:28px;top:266px;font-size:11px;font-weight:bold;color:#fff">HTTP Proxies</div>
<div class="t" style="left:28px;top:292px;font-size:11px;font-weight:bold;color:#fff">Developer Tools</div>
<div class="t" style="left:28px;top:317px;font-size:11px;font-weight:bold;color:#fff">CIA Triad</div>
<div class="t" style="left:28px;top:343px;font-size:11px;font-weight:bold;color:#fff">Crypto Basics</div>
<div class="t" style="left:28px;top:369px;font-size:11px;font-weight:bold;color:#fff">Writing new lesson</div>
<svg style="left:225px;top:237px" width="17" height="16" viewBox="0 0 17 16"><path d="M10.2 1.9H5.3Q2.3 1.9 2.3 4.9V9.9Q2.3 12.9 5.3 12.9H10.1Q13.1 12.9 13.1 9.9V7.6" stroke="#85fb7f" stroke-width="2.1" fill="none"/><path d="M5.2 6.6L8.6 9.6L14.2 2.6" stroke="#85fb7f" stroke-width="2.3" fill="none"/></svg>
<div class="t" style="left:20px;top:395.0px;font-size:12px;font-weight:bold;color:#111">(A1) Injection</div>
<svg style="left:225px;top:400.0px" width="5" height="8" viewBox="0 0 5 8"><path d="M0.7 0.7L4 4L0.7 7.3" stroke="#222" stroke-width="1.2" fill="none"/></svg>
<div class="t" style="left:20px;top:423.1px;font-size:12px;font-weight:bold;color:#111">(A2) Broken Authentication</div>
<svg style="left:225px;top:428.1px" width="5" height="8" viewBox="0 0 5 8"><path d="M0.7 0.7L4 4L0.7 7.3" stroke="#222" stroke-width="1.2" fill="none"/></svg>
<div class="t" style="left:20px;top:451.2px;font-size:12px;font-weight:bold;color:#111">(A3) Sensitive Data Exposure</div>
<svg style="left:225px;top:456.2px" width="5" height="8" viewBox="0 0 5 8"><path d="M0.7 0.7L4 4L0.7 7.3" stroke="#222" stroke-width="1.2" fill="none"/></svg>
<div class="t" style="left:20px;top:479.3px;font-size:12px;font-weight:bold;color:#111">(A4) XML External Entities (XXE)</div>
<svg style="left:225px;top:484.3px" width="5" height="8" viewBox="0 0 5 8"><path d="M0.7 0.7L4 4L0.7 7.3" stroke="#222" stroke-width="1.2" fill="none"/></svg>
<div class="t" style="left:20px;top:507.4px;font-size:12px;font-weight:bold;color:#111">(A5) Broken Access Control</div>
<svg style="left:225px;top:512.4px" width="5" height="8" viewBox="0 0 5 8"><path d="M0.7 0.7L4 4L0.7 7.3" stroke="#222" stroke-width="1.2" fill="none"/></svg>
<div class="t" style="left:20px;top:535.5px;font-size:12px;font-weight:bold;color:#111">(A7) Cross-Site Scripting (XSS)</div>
<svg style="left:225px;top:540.5px" width="5" height="8" viewBox="0 0 5 8"><path d="M0.7 0.7L4 4L0.7 7.3" stroke="#222" stroke-width="1.2" fill="none"/></svg>
<div class="t" style="left:20px;top:563.6px;font-size:12px;font-weight:bold;color:#111">(A8) Insecure Deserialization</div>
<svg style="left:225px;top:568.6px" width="5" height="8" viewBox="0 0 5 8"><path d="M0.7 0.7L4 4L0.7 7.3" stroke="#222" stroke-width="1.2" fill="none"/></svg>
<div class="t" style="left:20px;top:591.7px;font-size:12px;font-weight:bold;color:#111">(A9) Vulnerable Components</div>
<svg style="left:225px;top:596.7px" width="5" height="8" viewBox="0 0 5 8"><path d="M0.7 0.7L4 4L0.7 7.3" stroke="#222" stroke-width="1.2" fill="none"/></svg>
<div class="t" style="left:20px;top:619.8px;font-size:12px;font-weight:bold;color:#111">(A8:2013) Request Forgeries</div>
<svg style="left:225px;top:624.8px" width="5" height="8" viewBox="0 0 5 8"><path d="M0.7 0.7L4 4L0.7 7.3" stroke="#222" stroke-width="1.2" fill="none"/></svg>
<div class="t" style="left:20px;top:647.9px;font-size:12px;font-weight:bold;color:#111">Client side</div>
<svg style="left:225px;top:652.9px" width="5" height="8" viewBox="0 0 5 8"><path d="M0.7 0.7L4 4L0.7 7.3" stroke="#222" stroke-width="1.2" fill="none"/></svg>
<div class="t" style="left:20px;top:676.0px;font-size:12px;font-weight:bold;color:#111">Challenges</div>
<svg style="left:225px;top:681.0px" width="5" height="8" viewBox="0 0 5 8"><path d="M0.7 0.7L4 4L0.7 7.3" stroke="#222" stroke-width="1.2" fill="none"/></svg>
<svg style="left:225px;top:216px" width="5" height="8" viewBox="0 0 5 8"><path d="M0.7 0.7L4 4L0.7 7.3" stroke="#222" stroke-width="1.2" fill="none"/></svg>
<!-- hints buttons -->
<div class="a" style="left:0;top:217px;width:2256px;height:20px;overflow:hidden">
<div class="a" style="left:285px;top:-12px;width:65px;height:25px;background:#d9534f;border:1px solid #d43f3a;border-radius:3px"></div>
<div class="t" style="left:292px;top:-7px;font-size:12px;color:#fff">Hide hints</div>
<div class="a" style="left:358px;top:-12px;width:81px;height:25px;background:#efefef;border-radius:3px"></div>
<div class="t" style="left:365px;top:-7px;font-size:12px;color:#333">Reset lesson</div>
<div class="t" style="left:20px;top:-5px;font-size:12px;font-weight:bold;color:#111">General</div>
</div>
<!-- green hint box -->
<div class="a" style="left:281px;top:217px;width:1822px;height:95px;border-radius:0 0 5px 5px;box-shadow:0 1px 2px rgba(0,0,0,.06)"></div>
<div class="a" style="left:281px;top:331px;width:1822px;height:33px;background:#fff;border-radius:5px;box-shadow:0 0 2px rgba(0,0,0,.07)"></div>
<div class="a" style="left:282px;top:235px;width:1820px;height:75px;background:#f0f0f0;border:2px solid #1faa4a;border-radius:4px"></div>
<svg style="left:298px;top:252px" width="16" height="16" viewBox="0 0 16 16"><circle cx="8" cy="8" r="7.5" fill="#333"/><path d="M3.5 8L7.5 4.2V6.6H12V9.4H7.5V11.8Z" fill="#fff"/></svg>
<div class="t" style="left:299px;top:274px;font-size:14px;color:#333">Try to intercept the request with <span style="color:#3a8ed0">OWASP ZAP</span></div>
<!-- pagination -->
<svg style="left:283px;top:386px" width="16" height="16" viewBox="0 0 16 16"><circle cx="8" cy="8" r="7.5" fill="#333"/><path d="M3.5 8L7.5 4.2V6.6H12V9.4H7.5V11.8Z" fill="#fff"/></svg>
<div class="a" style="left:306px;top:387px;width:25px;height:20px;background:#555;border-radius:7px"></div>
<div class="t" style="left:306px;top:388.5px;width:25px;text-align:center;font-size:14px;font-weight:bold;color:#fff">1</div>
<div class="a" style="left:335px;top:387px;width:25px;height:20px;background:#227708;border-radius:7px"></div>
<div class="t" style="left:335px;top:388.5px;width:25px;text-align:center;font-size:14px;font-weight:bold;color:#fff">2</div>
<div class="a" style="left:364px;top:384px;width:25px;height:26px;background:#227708;border:3px solid #000;border-radius:7px"></div>
<div class="t" style="left:364px;top:388.5px;width:25px;text-align:center;font-size:14px;font-weight:bold;color:#fff">3</div>
<!-- quiz -->
<div class="t" style="left:280px;top:447px;font-size:30px;color:#222">The Quiz</div>
<div class="t" style="left:281px;top:495px;font-size:14px;color:#333">What type of HTTP command did WebGoat use for this lesson. A POST or a GET.</div>
<div class="a" style="left:281px;top:523px;width:1822px;height:119px;background:#f0f0f0;border:2px solid #a85757;border-radius:11px"></div>
<svg style="left:289px;top:534px" width="13" height="11" viewBox="0 0 13 11"><path d="M1 5.5L4.5 9L12 1.5" stroke="#222" stroke-width="2.6" fill="none"/></svg>
<div class="t" style="left:291px;top:558px;font-size:14px;color:#333">Was the HTTP command a POST or a GET:</div>
<div class="a" style="left:570px;top:553px;width:199px;height:26px;background:#fff;border:1px solid #8f8f9d;border-radius:2px"></div>
<div class="t" style="left:291px;top:590px;font-size:14px;color:#333">What is the magic number:</div>
<div class="a" style="left:570px;top:585px;width:199px;height:26px;background:#fff;border:1px solid #8f8f9d;border-radius:2px"></div>
<div class="a" style="left:769px;top:585px;width:34px;height:26px;background:#e9e9ed;border:1px solid #8f8f9d;border-radius:4px"></div>
<div class="t" style="left:774px;top:590px;font-size:14px;color:#222">Go!</div>
<div class="t" style="left:288.5px;top:616px;font-size:14px;font-weight:bold;color:#222">Congratulations. You have successfully completed the assignment.</div>
<div class="a" style="left:288px;top:634px;width:1808px;height:1px;background:#c8c8c8"></div>

<!-- devtools -->
<div class="a" style="left:5px;top:697px;width:2246px;height:780px;background:#fff"></div>
<div class="a" style="left:5px;top:697px;width:2246px;height:29px;background:#f9f9fa;border-top:1px solid #e0e0e2;border-bottom:1px solid #e0e0e2"></div>
<div class="a" style="left:298px;top:697px;width:84px;height:2px;background:#0a84ff"></div>
<svg style="left:13px;top:705px" width="16" height="16" viewBox="0 0 16 16"><path d="M6 14H2.5Q1 14 1 12.5V3.5Q1 2 2.5 2H12.5Q14 2 14 3.5V6" stroke="#222" stroke-width="1.5" fill="none"/><path d="M7 7L15 10L11.5 11.5L10 15Z" fill="#222"/></svg>
<div class="a" style="left:37px;top:702px;width:1px;height:20px;background:#d7d7db"></div>
<svg style="left:46px;top:704px" width="16" height="16" viewBox="0 0 16 16"><rect x="3" y="3" width="10" height="10" rx="1.5" stroke="#222" stroke-width="1.5" fill="none"/><path d="M8 0.5V3M8 13V15.5M0.5 8H3M13 8H15.5" stroke="#222" stroke-width="1.4"/></svg>
<div class="t" style="left:68px;top:706px;font-size:12px;color:#38383d">Inspector</div>
<svg style="left:134px;top:704px" width="16" height="16" viewBox="0 0 16 16"><rect x="1" y="2" width="14" height="12" rx="1.5" stroke="#222" stroke-width="1.5" fill="none"/><path d="M5 5.5L7.5 8L5 10.5" stroke="#222" stroke-width="1.4" fill="none"/></svg>
<div class="t" style="left:156px;top:706px;font-size:12px;color:#38383d">Console</div>
<svg style="left:214px;top:704px" width="17" height="16" viewBox="0 0 17 16"><path d="M2.5 3H11L15.5 8L11 13H2.5Q1 13 1 11.5V4.5Q1 3 2.5 3Z" stroke="#222" stroke-width="1.5" fill="none" stroke-linejoin="round"/></svg>
<div class="t" style="left:237px;top:706px;font-size:12px;color:#38383d">Debugger</div>
<svg style="left:305px;top:704px" width="16" height="16" viewBox="0 0 16 16"><path d="M4.5 15V1.5M1 5L4.5 1.5L8 5M11.5 1V14.5M8 11L11.5 14.5L15 11" stroke="#0061e0" stroke-width="1.8" fill="none"/></svg>
<div class="t" style="left:328px;top:706px;font-size:12px;color:#0061e0">Network</div>
<div class="t" style="left:391px;top:704px;font-size:15px;font-weight:bold;color:#38383d;letter-spacing:1px">{}</div>
<div class="t" style="left:412.8px;top:706px;font-size:12px;color:#38383d">Style Editor</div>
<svg style="left:490px;top:704px" width="16" height="16" viewBox="0 0 16 16"><path d="M3 14A6.5 6.5 0 1 1 13 14" stroke="#222" stroke-width="1.6" fill="none"/><path d="M7 13L10 6" stroke="#222" stroke-width="1.5"/><circle cx="7" cy="13" r="1.8" fill="#222"/></svg>
<div class="t" style="left:512px;top:706px;font-size:12px;color:#38383d">Performance</div>
<svg style="left:597px;top:704px" width="16" height="16" viewBox="0 0 16 16"><rect x="4" y="1.5" width="8" height="13" rx="2" stroke="#222" stroke-width="1.5" fill="none"/><path d="M1 4H3.5M1 7H3.5M1 10H3.5M1 13H3.5M12.5 4H15M12.5 7H15M12.5 10H15M12.5 13H15" stroke="#222" stroke-width="1"/></svg>
<div class="t" style="left:619px;top:706px;font-size:12px;color:#38383d">Memory</div>
<svg style="left:680px;top:704px" width="15" height="16" viewBox="0 0 15 16"><rect x="1" y="1" width="13" height="14" rx="2" stroke="#222" stroke-width="1.5" fill="none"/><path d="M4 5H11M4 9H11" stroke="#222" stroke-width="1.3"/></svg>
<div class="t" style="left:701px;top:706px;font-size:12px;color:#38383d">Storage</div>
<svg style="left:759px;top:703px" width="16" height="17" viewBox="0 0 16 17"><circle cx="8" cy="2.5" r="2" fill="#222"/><path d="M1 6H15M8 6V11M5.5 16.5L6.5 10H9.5L10.5 16.5" stroke="#222" stroke-width="2.2" fill="none"/></svg>
<div class="t" style="left:781px;top:706px;font-size:12px;color:#38383d">Accessibility</div>
<svg style="left:862px;top:704px" width="16" height="16" viewBox="0 0 16 16"><g fill="none" stroke="#222" stroke-width="1.1"><circle cx="3" cy="3" r="1.7"/><circle cx="8" cy="3" r="1.7"/><circle cx="13" cy="3" r="1.7"/><circle cx="3" cy="8" r="1.7"/><circle cx="8" cy="8" r="1.7"/><circle cx="13" cy="8" r="1.7"/><circle cx="3" cy="13" r="1.7"/><circle cx="8" cy="13" r="1.7"/><circle cx="13" cy="13" r="1.7"/></g></svg>
<div class="t" style="left:884px;top:706px;font-size:12px;color:#38383d">Application</div>
<svg style="left:2177px;top:704px" width="16" height="16" viewBox="0 0 16 16"><rect x="5" y="1" width="10" height="14" rx="1.5" stroke="#222" stroke-width="1.5" fill="none"/><rect x="1" y="6" width="6" height="9" rx="1" stroke="#222" stroke-width="1.5" fill="#f9f9fa"/></svg>
<svg style="left:2204px;top:710px" width="16" height="4"><circle cx="2" cy="2" r="1.8" fill="#222"/><circle cx="8" cy="2" r="1.8" fill="#222"/><circle cx="14" cy="2" r="1.8" fill="#222"/></svg>
<svg style="left:2232px;top:705px" width="12" height="12"><path d="M1 1L11 11M11 1L1 11" stroke="#222" stroke-width="1.5"/></svg>
<!-- toolbar -->
<div class="a" style="left:5px;top:726px;width:2246px;height:30px;background:#fff;border-bottom:1px solid #e0e0e2"></div>
<svg style="left:14px;top:732px" width="14" height="17" viewBox="0 0 14 17"><path d="M1 3.5H13M5 3.5V1.5H9V3.5M2.5 3.5L3.2 15.5H10.8L11.5 3.5" stroke="#222" stroke-width="1.5" fill="none" stroke-linejoin="round"/><path d="M5.3 6V13M7 6V13M8.7 6V13" stroke="#222" stroke-width="1"/></svg>
<div class="a" style="left:37px;top:731px;width:1px;height:20px;background:#e0e0e2"></div>
<svg style="left:47px;top:736px" width="12" height="12" viewBox="0 0 12 12"><path d="M0.8 0.8H11.2L7 6V11L5 10V6Z" stroke="#8a8a8f" stroke-width="1.1" fill="none" stroke-linejoin="round"/></svg>
<div class="t" style="left:62.4px;top:735px;font-size:11px;color:#8f8f95">Filter URLs</div>
<div class="a" style="left:1540px;top:731px;width:1px;height:20px;background:#e0e0e2"></div>
<svg style="left:1552px;top:735px" width="9" height="11"><path d="M1 0.5V10.5M8 0.5V10.5" stroke="#222" stroke-width="1.3"/></svg>
<svg style="left:1576px;top:734px" width="14" height="14" viewBox="0 0 14 14"><circle cx="5.5" cy="5.5" r="4.5" stroke="#222" stroke-width="1.6" fill="none"/><path d="M8.8 8.8L13 13" stroke="#222" stroke-width="2"/></svg>
<svg style="left:1605px;top:734px" width="13" height="13" viewBox="0 0 13 13"><circle cx="6.5" cy="6.5" r="5.5" stroke="#222" stroke-width="1.6" fill="none"/><path d="M2.6 2.6L10.4 10.4" stroke="#222" stroke-width="1.6"/></svg>
<div class="a" style="left:1627px;top:731px;width:1px;height:20px;background:#e0e0e2"></div>
<div class="a" style="left:1637px;top:733px;width:25px;height:16px;background:#e0e0e2;border-radius:2px"></div>
<div class="t" style="left:1642.6px;top:735px;font-size:11.3px;color:#38383d">All</div>
<div class="t" style="left:1670px;top:735px;font-size:11.3px;color:#38383d">HTML</div>
<div class="t" style="left:1712.8px;top:735px;font-size:11.3px;color:#38383d">CSS</div>
<div class="t" style="left:1745.6px;top:735px;font-size:11.3px;color:#38383d">JS</div>
<div class="t" style="left:1770.7px;top:735px;font-size:11.3px;color:#38383d">XHR</div>
<div class="t" style="left:1806px;top:735px;font-size:11.3px;color:#38383d">Fonts</div>
<div class="t" style="left:1847.7px;top:735px;font-size:11.3px;color:#38383d">Images</div>
<div class="t" style="left:1897.5px;top:735px;font-size:11.3px;color:#38383d">Media</div>
<div class="t" style="left:1941px;top:735px;font-size:11.3px;color:#38383d">WS</div>
<div class="t" style="left:1971.6px;top:735px;font-size:11.3px;color:#38383d">Other</div>
<div class="a" style="left:2015px;top:731px;width:1px;height:20px;background:#e0e0e2"></div>
<div class="a" style="left:2023.5px;top:734px;width:13px;height:13px;border:1.3px solid #333;border-radius:2px;background:#fff"></div>
<div class="t" style="left:2041px;top:735px;font-size:11.3px;color:#38383d">Disable Cache</div>
<div class="a" style="left:2117px;top:731px;width:1px;height:20px;background:#e0e0e2"></div>
<div class="t" style="left:2131px;top:734px;font-size:11.3px;color:#38383d">No Throttling</div>
<svg style="left:2201px;top:735px" width="6" height="11"><path d="M0.5 4.5L3 1L5.5 4.5ZM0.5 6.5L3 10L5.5 6.5Z" fill="#222"/></svg>
<div class="a" style="left:2218px;top:731px;width:1px;height:20px;background:#e0e0e2"></div>
<svg style="left:2225px;top:731px" width="18" height="18" viewBox="0 0 18 18"><g stroke="#222" stroke-width="2.2"><path d="M9 1V17M1 9H17M3.3 3.3L14.7 14.7M14.7 3.3L3.3 14.7"/></g><circle cx="9" cy="9" r="5" fill="#222"/><circle cx="9" cy="9" r="2.4" fill="#fff"/></svg>
<!-- table header -->
<div class="a" style="left:5px;top:756px;width:1684px;height:24px;background:#f9f9fa;border-bottom:1px solid #e0e0e2"></div>
<div class="t" style="left:10px;top:763px;font-size:11px;color:#38383d">Status</div>
<div class="t" style="left:123px;top:763px;font-size:11px;color:#38383d">Method</div>
<div class="t" style="left:236px;top:763px;font-size:11px;color:#38383d">Domain</div>
<div class="t" style="left:460px;top:763px;font-size:11px;color:#38383d">File</div>
<div class="t" style="left:1021px;top:763px;font-size:11px;color:#38383d">Initiator</div>
<div class="t" style="left:1246px;top:763px;font-size:11px;color:#38383d">Type</div>
<div class="t" style="left:1358px;top:763px;font-size:11px;color:#38383d">Transferred</div>
<div class="t" style="left:1582px;top:763px;font-size:11px;color:#38383d">Size</div>
<div id="rows">
<div class="a" style="left:5px;top:779px;width:1684px;height:24px;background:#fff"></div>
<div class="a" style="left:10px;top:784px;width:24px;height:14px;background:#058b00;border-radius:3px"></div><div class="t" style="left:12.5px;top:786px;font-family:'Liberation Mono',monospace;font-size:10.8px;color:#fff">200</div>
<div class="t" style="left:123px;top:786px;font-size:11px;color:#38383d">POST</div>
<svg style="left:236px;top:785px" width="10" height="13" viewBox="0 0 10 13"><path d="M2.6 5.5V4Q2.6 1.2 5 1.2Q7.4 1.2 7.4 4V5.5" stroke="#8a8a8f" stroke-width="1.7" fill="none"/><rect x="0.5" y="5" width="9" height="7.5" rx="1" fill="#8a8a8f"/></svg>
<div class="t" style="left:251px;top:786px;font-size:11.3px;color:#38383d">localhost:8080</div>
<div class="t" style="left:460px;top:786px;font-size:11px;color:#38383d">attack2</div>
<div class="t" style="left:1021px;top:786px;font-size:11px;color:#0061e0">jquery.min.js:2 <span style="color:#38383d">(xhr)</span></div>
<div class="t" style="left:1246px;top:786px;font-size:11px;color:#38383d">json</div>
<div class="t" style="left:1358px;top:786px;font-size:11px;color:#38383d">416 B</div>
<div class="t" style="left:1582px;top:786px;font-size:11px;color:#38383d">187 B</div>
<div class="a" style="left:5px;top:803px;width:1684px;height:24px;background:#f9f9fa"></div>
<div class="a" style="left:10px;top:808px;width:24px;height:14px;background:#058b00;border-radius:3px"></div><div class="t" style="left:12.5px;top:810px;font-family:'Liberation Mono',monospace;font-size:10.8px;color:#fff">200</div>
<div class="t" style="left:123px;top:810px;font-size:11px;color:#38383d">GET</div>
<svg style="left:236px;top:809px" width="10" height="13" viewBox="0 0 10 13"><path d="M2.6 5.5V4Q2.6 1.2 5 1.2Q7.4 1.2 7.4 4V5.5" stroke="#8a8a8f" stroke-width="1.7" fill="none"/><rect x="0.5" y="5" width="9" height="7.5" rx="1" fill="#8a8a8f"/></svg>
<div class="t" style="left:251px;top:810px;font-size:11.3px;color:#38383d">localhost:8080</div>
<div class="t" style="left:460px;top:810px;font-size:11px;color:#38383d">lessonmenu.mvc</div>
<div class="t" style="left:1021px;top:810px;font-size:11px;color:#0061e0">jquery.min.js:2 <span style="color:#38383d">(xhr)</span></div>
<div class="t" style="left:1246px;top:810px;font-size:11px;color:#38383d">json</div>
<div class="t" style="left:1358px;top:810px;font-size:11px;color:#38383d">7.41 KB</div>
<div class="t" style="left:1582px;top:810px;font-size:11px;color:#38383d">7.19 KB</div>
<div class="a" style="left:5px;top:827px;width:1684px;height:24px;background:#fff"></div>
<div class="a" style="left:10px;top:832px;width:24px;height:14px;background:#058b00;border-radius:3px"></div><div class="t" style="left:12.5px;top:834px;font-family:'Liberation Mono',monospace;font-size:10.8px;color:#fff">200</div>
<div class="t" style="left:123px;top:834px;font-size:11px;color:#38383d">GET</div>
<svg style="left:236px;top:833px" width="10" height="13" viewBox="0 0 10 13"><path d="M2.6 5.5V4Q2.6 1.2 5 1.2Q7.4 1.2 7.4 4V5.5" stroke="#8a8a8f" stroke-width="1.7" fill="none"/><rect x="0.5" y="5" width="9" height="7.5" rx="1" fill="#8a8a8f"/></svg>
<div class="t" style="left:251px;top:834px;font-size:11.3px;color:#38383d">localhost:8080</div>
<div class="t" style="left:460px;top:834px;font-size:11px;color:#38383d">lessonoverview.mvc</div>
<div class="t" style="left:1021px;top:834px;font-size:11px;color:#0061e0">jquery.min.js:2 <span style="color:#38383d">(xhr)</span></div>
<div class="t" style="left:1246px;top:834px;font-size:11px;color:#38383d">json</div>
<div class="t" style="left:1358px;top:834px;font-size:11px;color:#38383d">530 B</div>
<div class="t" style="left:1582px;top:834px;font-size:11px;color:#38383d">301 B</div>
<div class="a" style="left:5px;top:851px;width:1684px;height:24px;background:#f9f9fa"></div>
<div class="a" style="left:10px;top:856px;width:24px;height:14px;background:#058b00;border-radius:3px"></div><div class="t" style="left:12.5px;top:858px;font-family:'Liberation Mono',monospace;font-size:10.8px;color:#fff">200</div>
<div class="t" style="left:123px;top:858px;font-size:11px;color:#38383d">GET</div>
<svg style="left:236px;top:857px" width="10" height="13" viewBox="0 0 10 13"><path d="M2.6 5.5V4Q2.6 1.2 5 1.2Q7.4 1.2 7.4 4V5.5" stroke="#8a8a8f" stroke-width="1.7" fill="none"/><rect x="0.5" y="5" width="9" height="7.5" rx="1" fill="#8a8a8f"/></svg>
<div class="t" style="left:251px;top:858px;font-size:11.3px;color:#38383d">localhost:8080</div>
<div class="t" style="left:460px;top:858px;font-size:11px;color:#38383d">lessonmenu.mvc</div>
<div class="t" style="left:1021px;top:858px;font-size:11px;color:#0061e0">jquery.min.js:2 <span style="color:#38383d">(xhr)</span></div>
<div class="t" style="left:1246px;top:858px;font-size:11px;color:#38383d">json</div>
<div class="t" style="left:1358px;top:858px;font-size:11px;color:#38383d">7.41 KB</div>
<div class="t" style="left:1582px;top:858px;font-size:11px;color:#38383d">7.19 KB</div>
<div class="a" style="left:5px;top:875px;width:1684px;height:24px;background:#fff"></div>
<div class="a" style="left:10px;top:880px;width:24px;height:14px;background:#058b00;border-radius:3px"></div><div class="t" style="left:12.5px;top:882px;font-family:'Liberation Mono',monospace;font-size:10.8px;color:#fff">200</div>
<div class="t" style="left:123px;top:882px;font-size:11px;color:#38383d">GET</div>
<svg style="left:236px;top:881px" width="10" height="13" viewBox="0 0 10 13"><path d="M2.6 5.5V4Q2.6 1.2 5 1.2Q7.4 1.2 7.4 4V5.5" stroke="#8a8a8f" stroke-width="1.7" fill="none"/><rect x="0.5" y="5" width="9" height="7.5" rx="1" fill="#8a8a8f"/></svg>
<div class="t" style="left:251px;top:882px;font-size:11.3px;color:#38383d">localhost:8080</div>
<div class="t" style="left:460px;top:882px;font-size:11px;color:#38383d">lessonoverview.mvc</div>
<div class="t" style="left:1021px;top:882px;font-size:11px;color:#0061e0">jquery.min.js:2 <span style="color:#38383d">(xhr)</span></div>
<div class="t" style="left:1246px;top:882px;font-size:11px;color:#38383d">json</div>
<div class="t" style="left:1358px;top:882px;font-size:11px;color:#38383d">530 B</div>
<div class="t" style="left:1582px;top:882px;font-size:11px;color:#38383d">301 B</div>
<div class="a" style="left:5px;top:899px;width:1684px;height:24px;background:#f9f9fa"></div>
<div class="a" style="left:10px;top:904px;width:24px;height:14px;background:#058b00;border-radius:3px"></div><div class="t" style="left:12.5px;top:906px;font-family:'Liberation Mono',monospace;font-size:10.8px;color:#fff">200</div>
<div class="t" style="left:123px;top:906px;font-size:11px;color:#38383d">GET</div>
<svg style="left:236px;top:905px" width="10" height="13" viewBox="0 0 10 13"><path d="M2.6 5.5V4Q2.6 1.2 5 1.2Q7.4 1.2 7.4 4V5.5" stroke="#8a8a8f" stroke-width="1.7" fill="none"/><rect x="0.5" y="5" width="9" height="7.5" rx="1" fill="#8a8a8f"/></svg>
<div class="t" style="left:251px;top:906px;font-size:11.3px;color:#38383d">localhost:8080</div>
<div class="t" style="left:460px;top:906px;font-size:11px;color:#38383d">lessonmenu.mvc</div>
<div class="t" style="left:1021px;top:906px;font-size:11px;color:#0061e0">jquery.min.js:2 <span style="color:#38383d">(xhr)</span></div>
<div class="t" style="left:1246px;top:906px;font-size:11px;color:#38383d">json</div>
<div class="t" style="left:1358px;top:906px;font-size:11px;color:#38383d">7.41 KB</div>
<div class="t" style="left:1582px;top:906px;font-size:11px;color:#38383d">7.19 KB</div>
<div class="a" style="left:5px;top:923px;width:1684px;height:24px;background:#fff"></div>
<div class="a" style="left:10px;top:928px;width:24px;height:14px;background:#058b00;border-radius:3px"></div><div class="t" style="left:12.5px;top:930px;font-family:'Liberation Mono',monospace;font-size:10.8px;color:#fff">200</div>
<div class="t" style="left:123px;top:930px;font-size:11px;color:#38383d">GET</div>
<svg style="left:236px;top:929px" width="10" height="13" viewBox="0 0 10 13"><path d="M2.6 5.5V4Q2.6 1.2 5 1.2Q7.4 1.2 7.4 4V5.5" stroke="#8a8a8f" stroke-width="1.7" fill="none"/><rect x="0.5" y="5" width="9" height="7.5" rx="1" fill="#8a8a8f"/></svg>
<div class="t" style="left:251px;top:930px;font-size:11.3px;color:#38383d">localhost:8080</div>
<div class="t" style="left:460px;top:930px;font-size:11px;color:#38383d">lessonoverview.mvc</div>
<div class="t" style="left:1021px;top:930px;font-size:11px;color:#0061e0">jquery.min.js:2 <span style="color:#38383d">(xhr)</span></div>
<div class="t" style="left:1246px;top:930px;font-size:11px;color:#38383d">json</div>
<div class="t" style="left:1358px;top:930px;font-size:11px;color:#38383d">530 B</div>
<div class="t" style="left:1582px;top:930px;font-size:11px;color:#38383d">301 B</div>
<div class="a" style="left:5px;top:947px;width:1684px;height:24px;background:#0074e8"></div>
<div class="a" style="left:10px;top:952px;width:24px;height:14px;background:#058b00;border-radius:3px"></div><div class="t" style="left:12.5px;top:954px;font-family:'Liberation Mono',monospace;font-size:10.8px;color:#fff">200</div>
<div class="t" style="left:123px;top:954px;font-size:11px;color:#fff">POST</div>
<svg style="left:236px;top:953px" width="10" height="13" viewBox="0 0 10 13"><path d="M2.6 5.5V4Q2.6 1.2 5 1.2Q7.4 1.2 7.4 4V5.5" stroke="#fff" stroke-width="1.7" fill="none"/><rect x="0.5" y="5" width="9" height="7.5" rx="1" fill="#fff"/></svg>
<div class="t" style="left:251px;top:954px;font-size:11.3px;color:#fff">localhost:8080</div>
<div class="t" style="left:460px;top:954px;font-size:11px;color:#fff">attack2</div>
<div class="t" style="left:1021px;top:954px;font-size:11px;color:#fff">jquery.min.js:2 <span style="color:#fff">(xhr)</span></div>
<div class="t" style="left:1246px;top:954px;font-size:11px;color:#fff">json</div>
<div class="t" style="left:1358px;top:954px;font-size:11px;color:#fff">423 B</div>
<div class="t" style="left:1582px;top:954px;font-size:11px;color:#fff">194 B</div>
<div class="a" style="left:5px;top:971px;width:1684px;height:24px;background:#fff"></div>
<div class="a" style="left:10px;top:976px;width:24px;height:14px;background:#058b00;border-radius:3px"></div><div class="t" style="left:12.5px;top:978px;font-family:'Liberation Mono',monospace;font-size:10.8px;color:#fff">200</div>
<div class="t" style="left:123px;top:978px;font-size:11px;color:#38383d">GET</div>
<svg style="left:236px;top:977px" width="10" height="13" viewBox="0 0 10 13"><path d="M2.6 5.5V4Q2.6 1.2 5 1.2Q7.4 1.2 7.4 4V5.5" stroke="#8a8a8f" stroke-width="1.7" fill="none"/><rect x="0.5" y="5" width="9" height="7.5" rx="1" fill="#8a8a8f"/></svg>
<div class="t" style="left:251px;top:978px;font-size:11.3px;color:#38383d">localhost:8080</div>
<div class="t" style="left:460px;top:978px;font-size:11px;color:#38383d">lessonoverview.mvc</div>
<div class="t" style="left:1021px;top:978px;font-size:11px;color:#0061e0">jquery.min.js:2 <span style="color:#38383d">(xhr)</span></div>
<div class="t" style="left:1246px;top:978px;font-size:11px;color:#38383d">json</div>
<div class="t" style="left:1358px;top:978px;font-size:11px;color:#38383d">529 B</div>
<div class="t" style="left:1582px;top:978px;font-size:11px;color:#38383d">300 B</div>
<div class="a" style="left:5px;top:995px;width:1684px;height:24px;background:#f9f9fa"></div>
<div class="a" style="left:10px;top:1000px;width:24px;height:14px;background:#058b00;border-radius:3px"></div><div class="t" style="left:12.5px;top:1002px;font-family:'Liberation Mono',monospace;font-size:10.8px;color:#fff">200</div>
<div class="t" style="left:123px;top:1002px;font-size:11px;color:#38383d">GET</div>
<svg style="left:236px;top:1001px" width="10" height="13" viewBox="0 0 10 13"><path d="M2.6 5.5V4Q2.6 1.2 5 1.2Q7.4 1.2 7.4 4V5.5" stroke="#8a8a8f" stroke-width="1.7" fill="none"/><rect x="0.5" y="5" width="9" height="7.5" rx="1" fill="#8a8a8f"/></svg>
<div class="t" style="left:251px;top:1002px;font-size:11.3px;color:#38383d">localhost:8080</div>
<div class="t" style="left:460px;top:1002px;font-size:11px;color:#38383d">lessonmenu.mvc</div>
<div class="t" style="left:1021px;top:1002px;font-size:11px;color:#0061e0">jquery.min.js:2 <span style="color:#38383d">(xhr)</span></div>
<div class="t" style="left:1246px;top:1002px;font-size:11px;color:#38383d">json</div>
<div class="t" style="left:1358px;top:1002px;font-size:11px;color:#38383d">7.41 KB</div>
<div class="t" style="left:1582px;top:1002px;font-size:11px;color:#38383d">7.19 KB</div>
<div class="a" style="left:5px;top:1019px;width:1684px;height:24px;background:#fff"></div>
<div class="a" style="left:10px;top:1024px;width:24px;height:14px;background:#058b00;border-radius:3px"></div><div class="t" style="left:12.5px;top:1026px;font-family:'Liberation Mono',monospace;font-size:10.8px;color:#fff">200</div>
<div class="t" style="left:123px;top:1026px;font-size:11px;color:#38383d">GET</div>
<svg style="left:236px;top:1025px" width="10" height="13" viewBox="0 0 10 13"><path d="M2.6 5.5V4Q2.6 1.2 5 1.2Q7.4 1.2 7.4 4V5.5" stroke="#8a8a8f" stroke-width="1.7" fill="none"/><rect x="0.5" y="5" width="9" height="7.5" rx="1" fill="#8a8a8f"/></svg>
<div class="t" style="left:251px;top:1026px;font-size:11.3px;color:#38383d">localhost:8080</div>
<div class="t" style="left:460px;top:1026px;font-size:11px;color:#38383d">lessonmenu.mvc</div>
<div class="t" style="left:1021px;top:1026px;font-size:11px;color:#0061e0">jquery.min.js:2 <span style="color:#38383d">(xhr)</span></div>
<div class="t" style="left:1246px;top:1026px;font-size:11px;color:#38383d">json</div>
<div class="t" style="left:1358px;top:1026px;font-size:11px;color:#38383d">7.41 KB</div>
<div class="t" style="left:1582px;top:1026px;font-size:11px;color:#38383d">7.19 KB</div>
<div class="a" style="left:5px;top:1043px;width:1684px;height:24px;background:#f9f9fa"></div>
<div class="a" style="left:10px;top:1048px;width:24px;height:14px;background:#058b00;border-radius:3px"></div><div class="t" style="left:12.5px;top:1050px;font-family:'Liberation Mono',monospace;font-size:10.8px;color:#fff">200</div>
<div class="t" style="left:123px;top:1050px;font-size:11px;color:#38383d">GET</div>
<svg style="left:236px;top:1049px" width="10" height="13" viewBox="0 0 10 13"><path d="M2.6 5.5V4Q2.6 1.2 5 1.2Q7.4 1.2 7.4 4V5.5" stroke="#8a8a8f" stroke-width="1.7" fill="none"/><rect x="0.5" y="5" width="9" height="7.5" rx="1" fill="#8a8a8f"/></svg>
<div class="t" style="left:251px;top:1050px;font-size:11.3px;color:#38383d">localhost:8080</div>
<div class="t" style="left:460px;top:1050px;font-size:11px;color:#38383d">lessonoverview.mvc</div>
<div class="t" style="left:1021px;top:1050px;font-size:11px;color:#0061e0">jquery.min.js:2 <span style="color:#38383d">(xhr)</span></div>
<div class="t" style="left:1246px;top:1050px;font-size:11px;color:#38383d">json</div>
<div class="t" style="left:1358px;top:1050px;font-size:11px;color:#38383d">529 B</div>
<div class="t" style="left:1582px;top:1050px;font-size:11px;color:#38383d">300 B</div>
<div class="a" style="left:5px;top:1067px;width:1684px;height:24px;background:#fff"></div>
<div class="a" style="left:10px;top:1072px;width:24px;height:14px;background:#058b00;border-radius:3px"></div><div class="t" style="left:12.5px;top:1074px;font-family:'Liberation Mono',monospace;font-size:10.8px;color:#fff">200</div>
<div class="t" style="left:123px;top:1074px;font-size:11px;color:#38383d">GET</div>
<svg style="left:236px;top:1073px" width="10" height="13" viewBox="0 0 10 13"><path d="M2.6 5.5V4Q2.6 1.2 5 1.2Q7.4 1.2 7.4 4V5.5" stroke="#8a8a8f" stroke-width="1.7" fill="none"/><rect x="0.5" y="5" width="9" height="7.5" rx="1" fill="#8a8a8f"/></svg>
<div class="t" style="left:251px;top:1074px;font-size:11.3px;color:#38383d">localhost:8080</div>
<div class="t" style="left:460px;top:1074px;font-size:11px;color:#38383d">lessonmenu.mvc</div>
<div class="t" style="left:1021px;top:1074px;font-size:11px;color:#0061e0">jquery.min.js:2 <span style="color:#38383d">(xhr)</span></div>
<div class="t" style="left:1246px;top:1074px;font-size:11px;color:#38383d">json</div>
<div class="t" style="left:1358px;top:1074px;font-size:11px;color:#38383d">7.41 KB</div>
<div class="t" style="left:1582px;top:1074px;font-size:11px;color:#38383d">7.19 KB</div>
<div class="a" style="left:5px;top:1091px;width:1684px;height:24px;background:#f9f9fa"></div>
<div class="a" style="left:10px;top:1096px;width:24px;height:14px;background:#058b00;border-radius:3px"></div><div class="t" style="left:12.5px;top:1098px;font-family:'Liberation Mono',monospace;font-size:10.8px;color:#fff">200</div>
<div class="t" style="left:123px;top:1098px;font-size:11px;color:#38383d">GET</div>
<svg style="left:236px;top:1097px" width="10" height="13" viewBox="0 0 10 13"><path d="M2.6 5.5V4Q2.6 1.2 5 1.2Q7.4 1.2 7.4 4V5.5" stroke="#8a8a8f" stroke-width="1.7" fill="none"/><rect x="0.5" y="5" width="9" height="7.5" rx="1" fill="#8a8a8f"/></svg>
<div class="t" style="left:251px;top:1098px;font-size:11.3px;color:#38383d">localhost:8080</div>
<div class="t" style="left:460px;top:1098px;font-size:11px;color:#38383d">lessonoverview.mvc</div>
<div class="t" style="left:1021px;top:1098px;font-size:11px;color:#0061e0">jquery.min.js:2 <span style="color:#38383d">(xhr)</span></div>
<div class="t" style="left:1246px;top:1098px;font-size:11px;color:#38383d">json</div>
<div class="t" style="left:1358px;top:1098px;font-size:11px;color:#38383d">529 B</div>
<div class="t" style="left:1582px;top:1098px;font-size:11px;color:#38383d">300 B</div>
<div class="a" style="left:5px;top:1115px;width:1684px;height:24px;background:#fff"></div>
<div class="a" style="left:10px;top:1120px;width:24px;height:14px;background:#058b00;border-radius:3px"></div><div class="t" style="left:12.5px;top:1122px;font-family:'Liberation Mono',monospace;font-size:10.8px;color:#fff">200</div>
<div class="t" style="left:123px;top:1122px;font-size:11px;color:#38383d">GET</div>
<svg style="left:236px;top:1121px" width="10" height="13" viewBox="0 0 10 13"><path d="M2.6 5.5V4Q2.6 1.2 5 1.2Q7.4 1.2 7.4 4V5.5" stroke="#8a8a8f" stroke-width="1.7" fill="none"/><rect x="0.5" y="5" width="9" height="7.5" rx="1" fill="#8a8a8f"/></svg>
<div class="t" style="left:251px;top:1122px;font-size:11.3px;color:#38383d">localhost:8080</div>
<div class="t" style="left:460px;top:1122px;font-size:11px;color:#38383d">lessonmenu.mvc</div>
<div class="t" style="left:1021px;top:1122px;font-size:11px;color:#0061e0">jquery.min.js:2 <span style="color:#38383d">(xhr)</span></div>
<div class="t" style="left:1246px;top:1122px;font-size:11px;color:#38383d">json</div>
<div class="t" style="left:1358px;top:1122px;font-size:11px;color:#38383d">7.41 KB</div>
<div class="t" style="left:1582px;top:1122px;font-size:11px;color:#38383d">7.19 KB</div>
<div class="a" style="left:5px;top:1139px;width:1684px;height:24px;background:#f9f9fa"></div>
<div class="a" style="left:10px;top:1144px;width:24px;height:14px;background:#058b00;border-radius:3px"></div><div class="t" style="left:12.5px;top:1146px;font-family:'Liberation Mono',monospace;font-size:10.8px;color:#fff">200</div>
<div class="t" style="left:123px;top:1146px;font-size:11px;color:#38383d">GET</div>
<svg style="left:236px;top:1145px" width="10" height="13" viewBox="0 0 10 13"><path d="M2.6 5.5V4Q2.6 1.2 5 1.2Q7.4 1.2 7.4 4V5.5" stroke="#8a8a8f" stroke-width="1.7" fill="none"/><rect x="0.5" y="5" width="9" height="7.5" rx="1" fill="#8a8a8f"/></svg>
<div class="t" style="left:251px;top:1146px;font-size:11.3px;color:#38383d">localhost:8080</div>
<div class="t" style="left:460px;top:1146px;font-size:11px;color:#38383d">lessonoverview.mvc</div>
<div class="t" style="left:1021px;top:1146px;font-size:11px;color:#0061e0">jquery.min.js:2 <span style="color:#38383d">(xhr)</span></div>
<div class="t" style="left:1246px;top:1146px;font-size:11px;color:#38383d">json</div>
<div class="t" style="left:1358px;top:1146px;font-size:11px;color:#38383d">529 B</div>
<div class="t" style="left:1582px;top:1146px;font-size:11px;color:#38383d">300 B</div>
<div class="a" style="left:5px;top:1163px;width:1684px;height:24px;background:#fff"></div>
<div class="a" style="left:10px;top:1168px;width:24px;height:14px;background:#058b00;border-radius:3px"></div><div class="t" style="left:12.5px;top:1170px;font-family:'Liberation Mono',monospace;font-size:10.8px;color:#fff">200</div>
<div class="t" style="left:123px;top:1170px;font-size:11px;color:#38383d">GET</div>
<svg style="left:236px;top:1169px" width="10" height="13" viewBox="0 0 10 13"><path d="M2.6 5.5V4Q2.6 1.2 5 1.2Q7.4 1.2 7.4 4V5.5" stroke="#8a8a8f" stroke-width="1.7" fill="none"/><rect x="0.5" y="5" width="9" height="7.5" rx="1" fill="#8a8a8f"/></svg>
<div class="t" style="left:251px;top:1170px;font-size:11.3px;color:#38383d">localhost:8080</div>
<div class="t" style="left:460px;top:1170px;font-size:11px;color:#38383d">lessonmenu.mvc</div>
<div class="t" style="left:1021px;top:1170px;font-size:11px;color:#0061e0">jquery.min.js:2 <span style="color:#38383d">(xhr)</span></div>
<div class="t" style="left:1246px;top:1170px;font-size:11px;color:#38383d">json</div>
<div class="t" style="left:1358px;top:1170px;font-size:11px;color:#38383d">7.41 KB</div>
<div class="t" style="left:1582px;top:1170px;font-size:11px;color:#38383d">7.19 KB</div>
<div class="a" style="left:5px;top:1187px;width:1684px;height:24px;background:#f9f9fa"></div>
<div class="a" style="left:10px;top:1192px;width:24px;height:14px;background:#058b00;border-radius:3px"></div><div class="t" style="left:12.5px;top:1194px;font-family:'Liberation Mono',monospace;font-size:10.8px;color:#fff">200</div>
<div class="t" style="left:123px;top:1194px;font-size:11px;color:#38383d">GET</div>
<svg style="left:236px;top:1193px" width="10" height="13" viewBox="0 0 10 13"><path d="M2.6 5.5V4Q2.6 1.2 5 1.2Q7.4 1.2 7.4 4V5.5" stroke="#8a8a8f" stroke-width="1.7" fill="none"/><rect x="0.5" y="5" width="9" height="7.5" rx="1" fill="#8a8a8f"/></svg>
<div class="t" style="left:251px;top:1194px;font-size:11.3px;color:#38383d">localhost:8080</div>
<div class="t" style="left:460px;top:1194px;font-size:11px;color:#38383d">lessonoverview.mvc</div>
<div class="t" style="left:1021px;top:1194px;font-size:11px;color:#0061e0">jquery.min.js:2 <span style="color:#38383d">(xhr)</span></div>
<div class="t" style="left:1246px;top:1194px;font-size:11px;color:#38383d">json</div>
<div class="t" style="left:1358px;top:1194px;font-size:11px;color:#38383d">529 B</div>
<div class="t" style="left:1582px;top:1194px;font-size:11px;color:#38383d">300 B</div>
<div class="a" style="left:5px;top:1211px;width:1684px;height:24px;background:#fff"></div>
<div class="a" style="left:10px;top:1216px;width:24px;height:14px;background:#058b00;border-radius:3px"></div><div class="t" style="left:12.5px;top:1218px;font-family:'Liberation Mono',monospace;font-size:10.8px;color:#fff">200</div>
<div class="t" style="left:123px;top:1218px;font-size:11px;color:#38383d">GET</div>
<svg style="left:236px;top:1217px" width="10" height="13" viewBox="0 0 10 13"><path d="M2.6 5.5V4Q2.6 1.2 5 1.2Q7.4 1.2 7.4 4V5.5" stroke="#8a8a8f" stroke-width="1.7" fill="none"/><rect x="0.5" y="5" width="9" height="7.5" rx="1" fill="#8a8a8f"/></svg>
<div class="t" style="left:251px;top:1218px;font-size:11.3px;color:#38383d">localhost:8080</div>
<div class="t" style="left:460px;top:1218px;font-size:11px;color:#38383d">lessonmenu.mvc</div>
<div class="t" style="left:1021px;top:1218px;font-size:11px;color:#0061e0">jquery.min.js:2 <span style="color:#38383d">(xhr)</span></div>
<div class="t" style="left:1246px;top:1218px;font-size:11px;color:#38383d">json</div>
<div class="t" style="left:1358px;top:1218px;font-size:11px;color:#38383d">7.41 KB</div>
<div class="t" style="left:1582px;top:1218px;font-size:11px;color:#38383d">7.19 KB</div>
<div class="a" style="left:5px;top:1235px;width:1684px;height:24px;background:#f9f9fa"></div>
<div class="a" style="left:10px;top:1240px;width:24px;height:14px;background:#058b00;border-radius:3px"></div><div class="t" style="left:12.5px;top:1242px;font-family:'Liberation Mono',monospace;font-size:10.8px;color:#fff">200</div>
<div class="t" style="left:123px;top:1242px;font-size:11px;color:#38383d">GET</div>
<svg style="left:236px;top:1241px" width="10" height="13" viewBox="0 0 10 13"><path d="M2.6 5.5V4Q2.6 1.2 5 1.2Q7.4 1.2 7.4 4V5.5" stroke="#8a8a8f" stroke-width="1.7" fill="none"/><rect x="0.5" y="5" width="9" height="7.5" rx="1" fill="#8a8a8f"/></svg>
<div class="t" style="left:251px;top:1242px;font-size:11.3px;color:#38383d">localhost:8080</div>
<div class="t" style="left:460px;top:1242px;font-size:11px;color:#38383d">lessonoverview.mvc</div>
<div class="t" style="left:1021px;top:1242px;font-size:11px;color:#0061e0">jquery.min.js:2 <span style="color:#38383d">(xhr)</span></div>
<div class="t" style="left:1246px;top:1242px;font-size:11px;color:#38383d">json</div>
<div class="t" style="left:1358px;top:1242px;font-size:11px;color:#38383d">529 B</div>
<div class="t" style="left:1582px;top:1242px;font-size:11px;color:#38383d">300 B</div>
<div class="a" style="left:5px;top:1259px;width:1684px;height:24px;background:#fff"></div>
<div class="a" style="left:10px;top:1264px;width:24px;height:14px;background:#058b00;border-radius:3px"></div><div class="t" style="left:12.5px;top:1266px;font-family:'Liberation Mono',monospace;font-size:10.8px;color:#fff">200</div>
<div class="t" style="left:123px;top:1266px;font-size:11px;color:#38383d">GET</div>
<svg style="left:236px;top:1265px" width="10" height="13" viewBox="0 0 10 13"><path d="M2.6 5.5V4Q2.6 1.2 5 1.2Q7.4 1.2 7.4 4V5.5" stroke="#8a8a8f" stroke-width="1.7" fill="none"/><rect x="0.5" y="5" width="9" height="7.5" rx="1" fill="#8a8a8f"/></svg>
<div class="t" style="left:251px;top:1266px;font-size:11.3px;color:#38383d">localhost:8080</div>
<div class="t" style="left:460px;top:1266px;font-size:11px;color:#38383d">lessonmenu.mvc</div>
<div class="t" style="left:1021px;top:1266px;font-size:11px;color:#0061e0">jquery.min.js:2 <span style="color:#38383d">(xhr)</span></div>
<div class="t" style="left:1246px;top:1266px;font-size:11px;color:#38383d">json</div>
<div class="t" style="left:1358px;top:1266px;font-size:11px;color:#38383d">7.41 KB</div>
<div class="t" style="left:1582px;top:1266px;font-size:11px;color:#38383d">7.19 KB</div>
<div class="a" style="left:5px;top:1283px;width:1684px;height:24px;background:#f9f9fa"></div>
<div class="a" style="left:10px;top:1288px;width:24px;height:14px;background:#058b00;border-radius:3px"></div><div class="t" style="left:12.5px;top:1290px;font-family:'Liberation Mono',monospace;font-size:10.8px;color:#fff">200</div>
<div class="t" style="left:123px;top:1290px;font-size:11px;color:#38383d">GET</div>
<svg style="left:236px;top:1289px" width="10" height="13" viewBox="0 0 10 13"><path d="M2.6 5.5V4Q2.6 1.2 5 1.2Q7.4 1.2 7.4 4V5.5" stroke="#8a8a8f" stroke-width="1.7" fill="none"/><rect x="0.5" y="5" width="9" height="7.5" rx="1" fill="#8a8a8f"/></svg>
<div class="t" style="left:251px;top:1290px;font-size:11.3px;color:#38383d">localhost:8080</div>
<div class="t" style="left:460px;top:1290px;font-size:11px;color:#38383d">lessonoverview.mvc</div>
<div class="t" style="left:1021px;top:1290px;font-size:11px;color:#0061e0">jquery.min.js:2 <span style="color:#38383d">(xhr)</span></div>
<div class="t" style="left:1246px;top:1290px;font-size:11px;color:#38383d">json</div>
<div class="t" style="left:1358px;top:1290px;font-size:11px;color:#38383d">529 B</div>
<div class="t" style="left:1582px;top:1290px;font-size:11px;color:#38383d">300 B</div>
<div class="a" style="left:5px;top:1307px;width:1684px;height:24px;background:#fff"></div>
<div class="a" style="left:10px;top:1312px;width:24px;height:14px;background:#058b00;border-radius:3px"></div><div class="t" style="left:12.5px;top:1314px;font-family:'Liberation Mono',monospace;font-size:10.8px;color:#fff">200</div>
<div class="t" style="left:123px;top:1314px;font-size:11px;color:#38383d">GET</div>
<svg style="left:236px;top:1313px" width="10" height="13" viewBox="0 0 10 13"><path d="M2.6 5.5V4Q2.6 1.2 5 1.2Q7.4 1.2 7.4 4V5.5" stroke="#8a8a8f" stroke-width="1.7" fill="none"/><rect x="0.5" y="5" width="9" height="7.5" rx="1" fill="#8a8a8f"/></svg>
<div class="t" style="left:251px;top:1314px;font-size:11.3px;color:#38383d">localhost:8080</div>
<div class="t" style="left:460px;top:1314px;font-size:11px;color:#38383d">lessonmenu.mvc</div>
<div class="t" style="left:1021px;top:1314px;font-size:11px;color:#0061e0">jquery.min.js:2 <span style="color:#38383d">(xhr)</span></div>
<div class="t" style="left:1246px;top:1314px;font-size:11px;color:#38383d">json</div>
<div class="t" style="left:1358px;top:1314px;font-size:11px;color:#38383d">7.41 KB</div>
<div class="t" style="left:1582px;top:1314px;font-size:11px;color:#38383d">7.19 KB</div>
<div class="a" style="left:5px;top:1331px;width:1684px;height:24px;background:#f9f9fa"></div>
<div class="a" style="left:10px;top:1336px;width:24px;height:14px;background:#058b00;border-radius:3px"></div><div class="t" style="left:12.5px;top:1338px;font-family:'Liberation Mono',monospace;font-size:10.8px;color:#fff">200</div>
<div class="t" style="left:123px;top:1338px;font-size:11px;color:#38383d">GET</div>
<svg style="left:236px;top:1337px" width="10" height="13" viewBox="0 0 10 13"><path d="M2.6 5.5V4Q2.6 1.2 5 1.2Q7.4 1.2 7.4 4V5.5" stroke="#8a8a8f" stroke-width="1.7" fill="none"/><rect x="0.5" y="5" width="9" height="7.5" rx="1" fill="#8a8a8f"/></svg>
<div class="t" style="left:251px;top:1338px;font-size:11.3px;color:#38383d">localhost:8080</div>
<div class="t" style="left:460px;top:1338px;font-size:11px;color:#38383d">lessonoverview.mvc</div>
<div class="t" style="left:1021px;top:1338px;font-size:11px;color:#0061e0">jquery.min.js:2 <span style="color:#38383d">(xhr)</span></div>
<div class="t" style="left:1246px;top:1338px;font-size:11px;color:#38383d">json</div>
<div class="t" style="left:1358px;top:1338px;font-size:11px;color:#38383d">529 B</div>
<div class="t" style="left:1582px;top:1338px;font-size:11px;color:#38383d">300 B</div>
<div class="a" style="left:5px;top:1355px;width:1684px;height:24px;background:#fff"></div>
<div class="a" style="left:10px;top:1360px;width:24px;height:14px;background:#058b00;border-radius:3px"></div><div class="t" style="left:12.5px;top:1362px;font-family:'Liberation Mono',monospace;font-size:10.8px;color:#fff">200</div>
<div class="t" style="left:123px;top:1362px;font-size:11px;color:#38383d">GET</div>
<svg style="left:236px;top:1361px" width="10" height="13" viewBox="0 0 10 13"><path d="M2.6 5.5V4Q2.6 1.2 5 1.2Q7.4 1.2 7.4 4V5.5" stroke="#8a8a8f" stroke-width="1.7" fill="none"/><rect x="0.5" y="5" width="9" height="7.5" rx="1" fill="#8a8a8f"/></svg>
<div class="t" style="left:251px;top:1362px;font-size:11.3px;color:#38383d">localhost:8080</div>
<div class="t" style="left:460px;top:1362px;font-size:11px;color:#38383d">lessonmenu.mvc</div>
<div class="t" style="left:1021px;top:1362px;font-size:11px;color:#0061e0">jquery.min.js:2 <span style="color:#38383d">(xhr)</span></div>
<div class="t" style="left:1246px;top:1362px;font-size:11px;color:#38383d">json</div>
<div class="t" style="left:1358px;top:1362px;font-size:11px;color:#38383d">7.41 KB</div>
<div class="t" style="left:1582px;top:1362px;font-size:11px;color:#38383d">7.19 KB</div>
<div class="a" style="left:5px;top:1379px;width:1684px;height:24px;background:#f9f9fa"></div>
<div class="a" style="left:10px;top:1384px;width:24px;height:14px;background:#058b00;border-radius:3px"></div><div class="t" style="left:12.5px;top:1386px;font-family:'Liberation Mono',monospace;font-size:10.8px;color:#fff">200</div>
<div class="t" style="left:123px;top:1386px;font-size:11px;color:#38383d">GET</div>
<svg style="left:236px;top:1385px" width="10" height="13" viewBox="0 0 10 13"><path d="M2.6 5.5V4Q2.6 1.2 5 1.2Q7.4 1.2 7.4 4V5.5" stroke="#8a8a8f" stroke-width="1.7" fill="none"/><rect x="0.5" y="5" width="9" height="7.5" rx="1" fill="#8a8a8f"/></svg>
<div class="t" style="left:251px;top:1386px;font-size:11.3px;color:#38383d">localhost:8080</div>
<div class="t" style="left:460px;top:1386px;font-size:11px;color:#38383d">lessonoverview.mvc</div>
<div class="t" style="left:1021px;top:1386px;font-size:11px;color:#0061e0">jquery.min.js:2 <span style="color:#38383d">(xhr)</span></div>
<div class="t" style="left:1246px;top:1386px;font-size:11px;color:#38383d">json</div>
<div class="t" style="left:1358px;top:1386px;font-size:11px;color:#38383d">529 B</div>
<div class="t" style="left:1582px;top:1386px;font-size:11px;color:#38383d">300 B</div>
<div class="a" style="left:5px;top:1403px;width:1684px;height:24px;background:#fff"></div>
<div class="a" style="left:10px;top:1408px;width:24px;height:14px;background:#058b00;border-radius:3px"></div><div class="t" style="left:12.5px;top:1410px;font-family:'Liberation Mono',monospace;font-size:10.8px;color:#fff">200</div>
<div class="t" style="left:123px;top:1410px;font-size:11px;color:#38383d">GET</div>
<svg style="left:236px;top:1409px" width="10" height="13" viewBox="0 0 10 13"><path d="M2.6 5.5V4Q2.6 1.2 5 1.2Q7.4 1.2 7.4 4V5.5" stroke="#8a8a8f" stroke-width="1.7" fill="none"/><rect x="0.5" y="5" width="9" height="7.5" rx="1" fill="#8a8a8f"/></svg>
<div class="t" style="left:251px;top:1410px;font-size:11.3px;color:#38383d">localhost:8080</div>
<div class="t" style="left:460px;top:1410px;font-size:11px;color:#38383d">lessonmenu.mvc</div>
<div class="t" style="left:1021px;top:1410px;font-size:11px;color:#0061e0">jquery.min.js:2 <span style="color:#38383d">(xhr)</span></div>
<div class="t" style="left:1246px;top:1410px;font-size:11px;color:#38383d">json</div>
<div class="t" style="left:1358px;top:1410px;font-size:11px;color:#38383d">7.41 KB</div>
<div class="t" style="left:1582px;top:1410px;font-size:11px;color:#38383d">7.19 KB</div>
<div class="a" style="left:5px;top:1427px;width:1684px;height:24px;background:#f9f9fa"></div>
<div class="a" style="left:10px;top:1432px;width:24px;height:14px;background:#058b00;border-radius:3px"></div><div class="t" style="left:12.5px;top:1434px;font-family:'Liberation Mono',monospace;font-size:10.8px;color:#fff">200</div>
<div class="t" style="left:123px;top:1434px;font-size:11px;color:#38383d">GET</div>
<svg style="left:236px;top:1433px" width="10" height="13" viewBox="0 0 10 13"><path d="M2.6 5.5V4Q2.6 1.2 5 1.2Q7.4 1.2 7.4 4V5.5" stroke="#8a8a8f" stroke-width="1.7" fill="none"/><rect x="0.5" y="5" width="9" height="7.5" rx="1" fill="#8a8a8f"/></svg>
<div class="t" style="left:251px;top:1434px;font-size:11.3px;color:#38383d">localhost:8080</div>
<div class="t" style="left:460px;top:1434px;font-size:11px;color:#38383d">lessonoverview.mvc</div>
<div class="t" style="left:1021px;top:1434px;font-size:11px;color:#0061e0">jquery.min.js:2 <span style="color:#38383d">(xhr)</span></div>
<div class="t" style="left:1246px;top:1434px;font-size:11px;color:#38383d">json</div>
<div class="t" style="left:1358px;top:1434px;font-size:11px;color:#38383d">529 B</div>
<div class="t" style="left:1582px;top:1434px;font-size:11px;color:#38383d">300 B</div>
</div>
<div class="a" style="left:117px;top:756px;width:1px;height:190px;background:#e0e0e2"></div><div class="a" style="left:117px;top:970px;width:1px;height:482px;background:#e0e0e2"></div>
<div class="a" style="left:230px;top:756px;width:1px;height:190px;background:#e0e0e2"></div><div class="a" style="left:230px;top:970px;width:1px;height:482px;background:#e0e0e2"></div>
<div class="a" style="left:454px;top:756px;width:1px;height:190px;background:#e0e0e2"></div><div class="a" style="left:454px;top:970px;width:1px;height:482px;background:#e0e0e2"></div>
<div class="a" style="left:1015px;top:756px;width:1px;height:190px;background:#e0e0e2"></div><div class="a" style="left:1015px;top:970px;width:1px;height:482px;background:#e0e0e2"></div>
<div class="a" style="left:1240px;top:756px;width:1px;height:190px;background:#e0e0e2"></div><div class="a" style="left:1240px;top:970px;width:1px;height:482px;background:#e0e0e2"></div>
<div class="a" style="left:1353px;top:756px;width:1px;height:190px;background:#e0e0e2"></div><div class="a" style="left:1353px;top:970px;width:1px;height:482px;background:#e0e0e2"></div>
<div class="a" style="left:1577px;top:756px;width:1px;height:190px;background:#e0e0e2"></div><div class="a" style="left:1577px;top:970px;width:1px;height:482px;background:#e0e0e2"></div>
<div class="a" style="left:5px;top:779px;width:1684px;height:1px;background:#e0e0e2"></div>
<!-- table scrollbar -->
<div class="a" style="left:1689px;top:756px;width:12px;height:696px;background:#ededf0"></div>
<div class="a" style="left:1692px;top:1222px;width:6px;height:226px;background:#a0a0a5;border-radius:3px"></div>
<!-- footer -->
<div class="a" style="left:5px;top:1452px;width:1696px;height:25px;background:#f9f9fa;border-top:1px solid #e0e0e2"></div>
<svg style="left:15px;top:1456px" width="14" height="16" viewBox="0 0 14 16"><circle cx="7" cy="9.5" r="5.5" stroke="#222" stroke-width="1.5" fill="none"/><path d="M4.5 1.2H9.5M7 1.2V4M7 9.5L9 7.5" stroke="#222" stroke-width="1.5"/></svg>
<div class="t" style="left:46px;top:1460px;font-size:11px;color:#38383d">82 requests</div>
<div class="a" style="left:114px;top:1457px;width:1px;height:15px;background:#d7d7db"></div>
<div class="t" style="left:125px;top:1460px;font-size:11px;color:#38383d">285.56 KB / 303.90 KB transferred</div>
<div class="a" style="left:302px;top:1457px;width:1px;height:15px;background:#d7d7db"></div>
<div class="t" style="left:313px;top:1460px;font-size:11px;color:#38383d">Finish: 3.08 min</div>
<!-- sidebar -->
<div class="a" style="left:1700px;top:756px;width:1px;height:721px;background:#e0e0e2"></div>
<div class="a" style="left:1701px;top:756px;width:1549px;height:24px;background:#f9f9fa;border-bottom:1px solid #e0e0e2"></div>
<div class="a" style="left:1860px;top:756px;width:65px;height:2px;background:#0a84ff"></div>
<svg style="left:1708px;top:761px" width="14" height="13" viewBox="0 0 14 13"><rect x="0.7" y="0.7" width="12.6" height="11.6" stroke="#222" stroke-width="1.3" fill="none"/><path d="M10 0.7V12.3" stroke="#222" stroke-width="1.3"/><path d="M3.5 3.5L7 6.5L3.5 9.5Z" stroke="#222" stroke-width="1.1" fill="none"/></svg>
<div class="t" style="left:1740px;top:762px;font-size:11.6px;color:#38383d">Headers</div>
<div class="t" style="left:1806px;top:762px;font-size:11.6px;color:#38383d">Cookies</div>
<div class="t" style="left:1871px;top:762px;font-size:11.6px;color:#0061e0">Request</div>
<div class="t" style="left:1936px;top:762px;font-size:11.6px;color:#38383d">Response</div>
<div class="t" style="left:2009px;top:762px;font-size:11.6px;color:#38383d">Timings</div>
<div class="t" style="left:2074px;top:762px;font-size:11.6px;color:#38383d">Stack Trace</div>
<div class="a" style="left:1701px;top:780px;width:1549px;height:26px;background:#fff;border-bottom:1px solid #e0e0e2"></div>
<svg style="left:1710px;top:788px" width="11" height="11" viewBox="0 0 12 12"><path d="M0.8 0.8H11.2L7 6V11L5 10V6Z" stroke="#8a8a8f" stroke-width="1.1" fill="none" stroke-linejoin="round"/></svg>
<div class="t" style="left:1724.6px;top:787px;font-size:10.8px;color:#8f8f95">Filter Request Parameters</div>
<div class="a" style="left:1701px;top:806px;width:1549px;height:25px;background:#f9f9fa;border-bottom:1px solid #e0e0e2"></div>
<div class="t" style="left:1705px;top:812px;font-size:11.2px;color:#38383d">Form data</div>
<div class="t" style="left:2192px;top:812px;font-size:11.2px;color:#38383d">Raw</div>
<div class="a" style="left:2219px;top:811px;width:25px;height:13px;background:#e0e0e2;border-radius:7px"></div>
<div class="a" style="left:2221px;top:813px;width:9px;height:9px;background:#fff;border-radius:5px"></div>
<div class="t" style="left:1721px;top:835px;font-size:11px;color:#0074e8">magic_num: <span style="color:#dd00a9">"37"</span></div>
<div class="t" style="left:1721px;top:855px;font-size:11px;color:#0074e8">answer: <span style="color:#dd00a9">"POST"</span></div>
<div class="t" style="left:1721px;top:875px;font-size:11px;color:#0074e8">magic_answer: <span style="color:#dd00a9">"37"</span></div>

<!-- vbox status bar -->
<div class="a" style="left:5px;top:1477px;width:2246px;height:22px;background:#efefef;border-radius:0 0 6px 6px"></div>
<svg style="left:1965px;top:1480px" width="14" height="15" viewBox="0 0 14 15"><rect x="0.5" y="0.5" width="13" height="14" rx="1.5" fill="#3a8ee8" stroke="#1a5ab8"/><circle cx="7" cy="6.5" r="3.8" fill="none" stroke="#fff" stroke-width="1.5"/><path d="M3 13L8 8" stroke="#fff" stroke-width="1.5"/></svg>
<svg style="left:1984px;top:1480px" width="15" height="15"><circle cx="7.5" cy="7.5" r="7" fill="#dcdcdc" stroke="#c4c4c4"/><circle cx="7.5" cy="7.5" r="1.5" fill="#b0b0b0"/></svg>
<svg style="left:2003px;top:1480px" width="16" height="15" viewBox="0 0 16 15"><path d="M1 4H4L8 1V14L4 11H1Z" fill="#4aa0f0" stroke="#1a6ad0" stroke-width="0.8"/><rect x="9" y="3" width="6" height="11" fill="#d0d0d0"/><path d="M10 5H14M10 7H14M10 9H14M10 11H14" stroke="#999" stroke-width="0.7"/></svg>
<svg style="left:2022px;top:1480px" width="15" height="15" viewBox="0 0 15 15"><rect x="4" y="1" width="10" height="7" fill="#2a78e0" stroke="#333" stroke-width="0.8"/><rect x="1" y="6" width="9" height="7" fill="#2a78e0" stroke="#333" stroke-width="0.8"/><rect x="2.5" y="7.5" width="6" height="4" fill="#5aa8f8"/></svg>
<svg style="left:2041px;top:1480px" width="16" height="15" viewBox="0 0 16 15"><path d="M1 14L3 9L10 2L14 6L7 13Z" fill="#5ab0f8" stroke="#1a6ad0" stroke-width="0.8"/><rect x="10.5" y="0.5" width="4" height="4" transform="rotate(45 12.5 2.5)" fill="#fff" stroke="#555" stroke-width="0.7"/></svg>
<div class="a" style="left:2060px;top:1481px;width:15px;height:14px;background:#d4d4d4;border:1px solid #c8c8c8;border-radius:1px"></div>
<svg style="left:2079px;top:1480px" width="15" height="15" viewBox="0 0 15 15"><rect x="0.5" y="0.5" width="14" height="11" fill="#fff" stroke="#333" stroke-width="0.9"/><rect x="2" y="2" width="11" height="8" fill="#2a78e0"/><rect x="4" y="4" width="7" height="4" fill="#fff"/><rect x="4" y="12" width="7" height="2.5" fill="#ccc"/></svg>
<svg style="left:2098px;top:1480px" width="15" height="15" viewBox="0 0 15 15"><rect x="5" y="1" width="9" height="8" rx="1" fill="#5aa8f8" stroke="#1a6ad0" stroke-width="0.8"/><rect x="1" y="5" width="9" height="9" fill="#2a78e0" stroke="#333" stroke-width="0.8"/></svg>
<svg style="left:2117px;top:1480px" width="16" height="15" viewBox="0 0 16 15"><rect x="1" y="1" width="10" height="13" fill="#4a6ae0" stroke="#2a3ab0" stroke-width="0.8"/><text x="6" y="11" font-size="9" font-family="Liberation Sans" font-weight="bold" fill="#fff" text-anchor="middle">V</text><rect x="12" y="0.5" width="3" height="14" fill="#111"/><rect x="13" y="4" width="1.2" height="10" fill="#7c2"/><rect x="13" y="4" width="1.2" height="4" fill="#ec2"/></svg>
<svg style="left:2136px;top:1480px" width="16" height="15" viewBox="0 0 16 15"><circle cx="7.5" cy="7.5" r="7" fill="#5ab0f8" stroke="#1a6ad0" stroke-width="0.8"/><path d="M6 3L12 8L7 14L5 12L8 8L4 5Z" fill="#6c3" stroke="#3a8a10" stroke-width="0.7"/></svg>
<svg style="left:2155px;top:1480px" width="15" height="15" viewBox="0 0 15 15"><rect x="0.5" y="0.5" width="14" height="14" rx="2" fill="#5ab0f8" stroke="#1a6ad0" stroke-width="0.8"/><path d="M5 2H10V6H13L7.5 12L2 6H5Z" fill="#6c3" stroke="#2a7a10" stroke-width="0.7"/></svg>
<div class="t" style="left:2174.6px;top:1482px;font-size:12.9px;color:#1a1a1a">Right Ctrl</div>

</body></html>
